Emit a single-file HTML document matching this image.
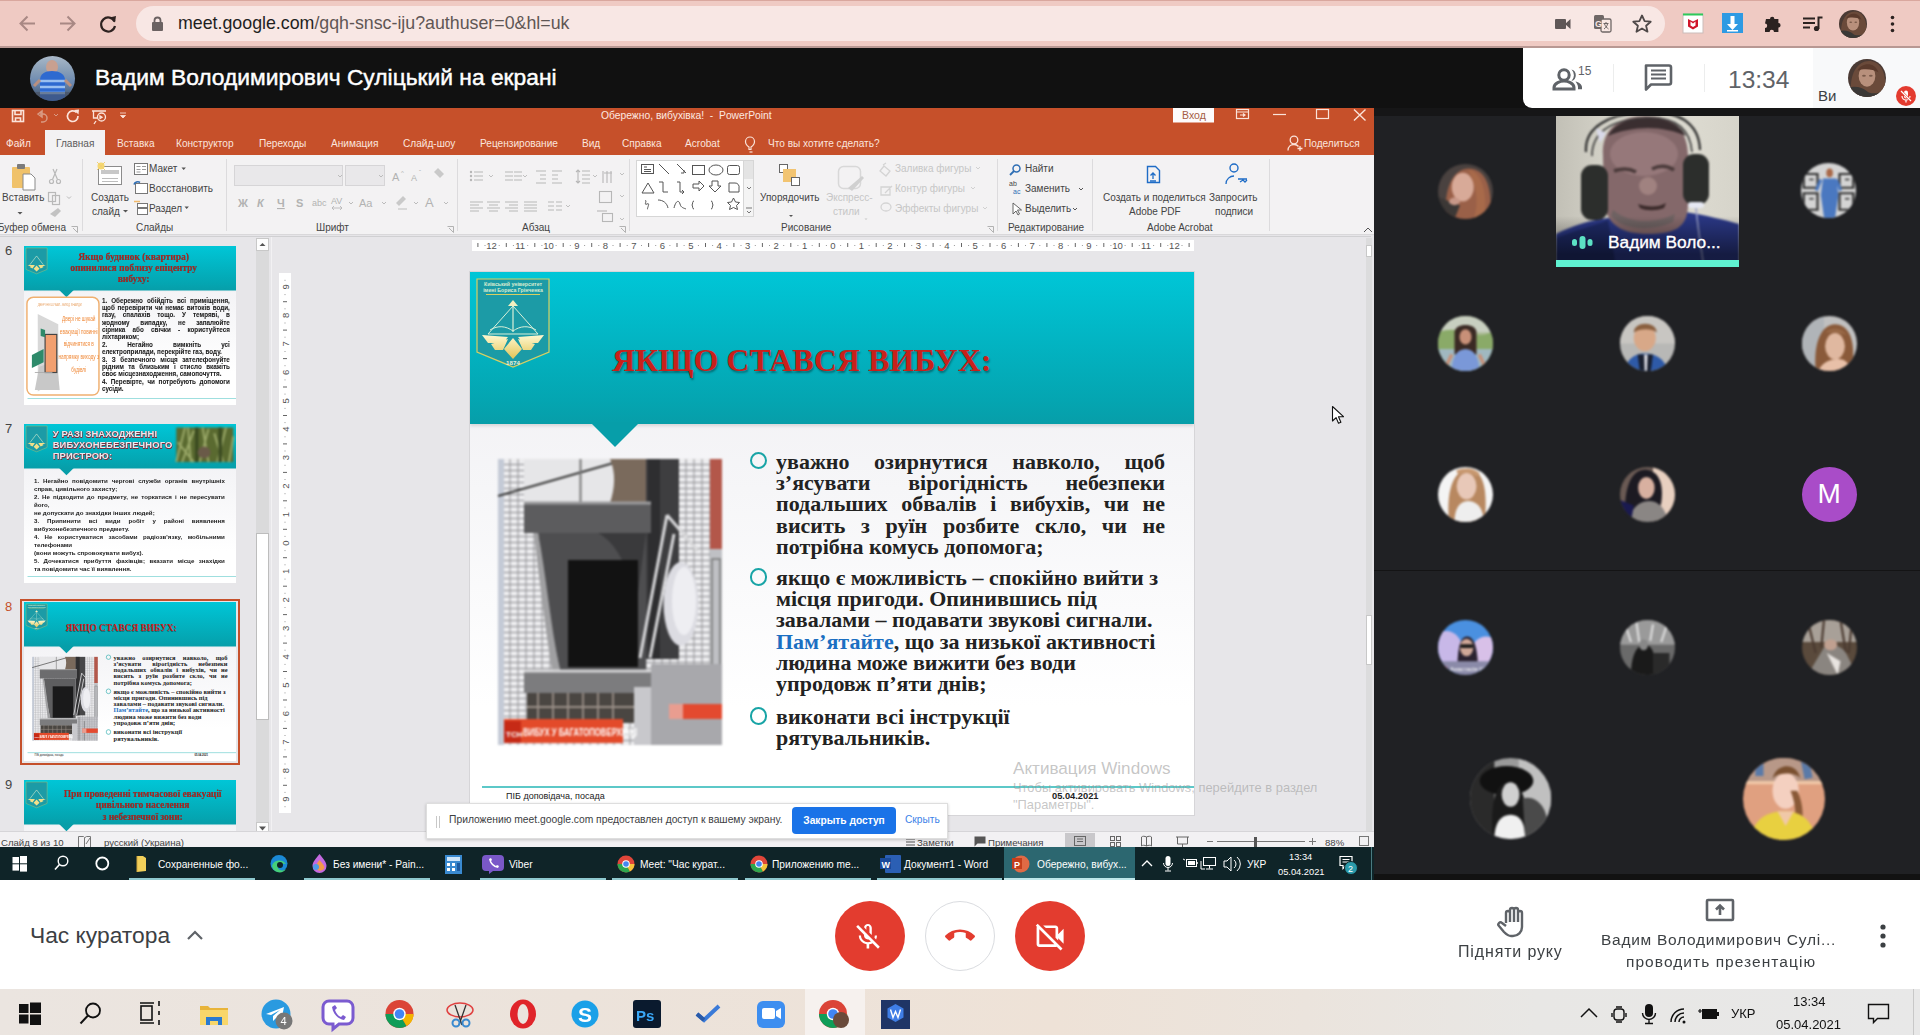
<!DOCTYPE html>
<html><head><meta charset="utf-8">
<style>
*{margin:0;padding:0;box-sizing:border-box}
html,body{width:1920px;height:1035px;overflow:hidden;background:#fff;font-family:"Liberation Sans",sans-serif}
.a{position:absolute}
.sv{position:absolute;overflow:visible}
/* chrome */
#chrome{left:0;top:0;width:1920px;height:48px;background:#efcac3;border-top:1px solid #d9a79e}
#omni{left:136px;top:6px;width:1529px;height:35px;border-radius:18px;background:#f8e7e4}
#url{left:178px;top:13px;font-size:17.8px;color:#5f5654;white-space:nowrap;letter-spacing:0px}
#url b{font-weight:normal;color:#1f1f1f}
/* meet header */
#mhead{left:0;top:48px;width:1920px;height:60px;background:#111}
#mname{left:95px;top:64px;font-size:22.8px;color:#fff;white-space:nowrap;-webkit-text-stroke:.45px #fff}
#mpanel{left:1523px;top:48px;width:397px;height:60px;background:#fff;border-bottom-left-radius:9px}
#mpanel2{left:1813px;top:48px;width:107px;height:60px;background:#f8f9fa}
/* ppt */
#ppt{left:0;top:108px;width:1374px;height:772px;background:#e6e5e8;overflow:hidden}
#ptitle{left:0;top:0;width:1374px;height:47px;background:#c6502a}
#ptab{left:45px;top:22px;width:60px;height:26px;background:#f3f2f3}
#ribbon{left:0;top:47px;width:1374px;height:80px;background:#f3f2f3;border-bottom:1px solid #d9d8da}
.tab{position:absolute;top:30px;font-size:10.1px;color:#fbe5de;white-space:nowrap}
.rb{position:absolute;font-size:10px;color:#444;white-space:nowrap;line-height:12px}
.rg{position:absolute;top:114px;font-size:10px;color:#444;white-space:nowrap;line-height:12px}
.rsep{position:absolute;top:51px;width:1px;height:72px;background:#d4d3d5}
/* grid */
#grid{left:1374px;top:108px;width:546px;height:772px;background:#202124}
.av{position:absolute;border-radius:50%}

/* content */
.slide{position:absolute;width:724px;height:543px;overflow:hidden;background:linear-gradient(#eeedf1 0,#f6f6f8 40%,#fff 80%);font-family:"Liberation Serif",serif}
.shead{position:absolute;left:0;top:0;width:724px;height:152px;background:linear-gradient(#00c6d7,#04a5b1 85%,#079ea9);box-shadow:0 2px 3px rgba(0,0,0,.12)}
.stri{position:absolute;left:120px;top:150px;width:0;height:0;border-left:25px solid transparent;border-right:25px solid transparent;border-top:25px solid #079ea9}
.stitle{position:absolute;left:142px;top:70px;font-size:32px;font-weight:bold;color:#c8201a;white-space:nowrap;text-shadow:1px 2px 2px rgba(0,0,0,.35)}
.stext{position:absolute;left:306px;width:389px;font-size:22px;line-height:21.2px;font-weight:bold;color:#222;text-align:justify;text-align-last:left}
.stext .j{text-align-last:justify}
.bul{position:absolute;left:280px;width:17.5px;height:17.5px;border-radius:50%;border:2.6px solid #18a4a6}
.sfoot{position:absolute;left:12px;top:514px;width:712px;height:1.5px;background:#5cc8c8}
.sft{position:absolute;top:519px;font-family:"Liberation Sans",sans-serif;font-size:9px;color:#222;white-space:nowrap}
.vnum{position:absolute;font-size:10px;color:#555;transform:rotate(-90deg);transform-origin:center}
.thumb{position:absolute;width:212px;height:159px;overflow:hidden;background:#fff}
.tnum{position:absolute;left:5px;font-size:13px;color:#444}
.st{position:absolute;top:4px;font-size:9.6px;color:#444;white-space:nowrap;line-height:13px}
.ul{position:absolute;top:31px;height:2px;background:#8fc9cf}
.tt{position:absolute;top:10px;font-size:10.2px;color:#fff;white-space:nowrap;line-height:15px}
/* bottom */
#mbot{left:0;top:880px;width:1920px;height:109px;background:#fff}
#wtask{left:0;top:989px;width:1920px;height:46px;background:#ebe3dd}
</style></head><body>

<!-- CHROME -->
<div id="chrome" class="a"></div>
<div class="a" style="left:0;top:46px;width:1920px;height:2px;background:#b89893"></div>
<div id="omni" class="a"></div>
<svg class="sv" style="left:0;top:0" width="1920" height="48">
 <g fill="none" stroke-width="2">
  <path d="M35 23.5H21M27.5 16.5l-7 7 7 7" stroke="#a88884"/>
  <path d="M60 23.5h14M67.5 16.5l7 7-7 7" stroke="#a88884"/>
  <path d="M114.5 21.5A7 7 0 1 0 115 26" stroke="#2e2220" stroke-width="2.2"/>
 </g>
 <path d="M109.5 17.5l6.5-1.5-1 6.5z" fill="#2e2220"/>
 <rect x="152" y="22" width="11" height="9" rx="1" fill="#6b6262"/>
 <path d="M154.5 22.5v-2a3 3 0 0 1 6 0v2" fill="none" stroke="#6b6262" stroke-width="1.8"/>
 <!-- camera -->
 <rect x="1555" y="19" width="11" height="10" rx="1" fill="#5f5757"/>
 <path d="M1565 24l5.5-5v10z" fill="#5f5757"/>
 <!-- translate -->
 <rect x="1594" y="15" width="10" height="14" rx="1.5" fill="#6f6766"/>
 <rect x="1601" y="19" width="10" height="13" rx="1.5" fill="#f9e8e4" stroke="#6f6766" stroke-width="1.3"/>
 <text x="1595" y="26.5" font-family="Liberation Sans" font-weight="bold" font-size="9" fill="#f9e8e4">G</text>
 <path d="M1603.5 23.5h5M1606 22v1.5M1604.5 24c1 2.5 2.5 4 4 5M1607.5 24c-.5 2.5-2 4-3.5 5" stroke="#6f6766" stroke-width="1" fill="none"/>
 <!-- star -->
 <path d="M1642 15.5l2.6 5.6 6.1.6-4.6 4 1.4 6-5.5-3.2-5.5 3.2 1.4-6-4.6-4 6.1-.6z" fill="none" stroke="#4e4848" stroke-width="1.8" stroke-linejoin="round"/>
 <!-- mcafee -->
 <rect x="1683" y="14" width="20" height="19" fill="#fff" stroke="#cbbcba" stroke-width="1"/>
 <rect x="1683" y="13.5" width="20" height="2" fill="#2fc95a"/>
 <path d="M1688 19l5 2.5 5-2.5v7.5l-5 3-5-3z" fill="#d0152a"/>
 <path d="M1690.5 21.5l2.5 2 2.5-2v4l-2.5 1.5-2.5-1.5z" fill="#fff"/>
 <!-- download -->
 <rect x="1722" y="13" width="21" height="20" fill="#2e9ae3"/>
 <path d="M1730.5 16h4v8h3.5l-5.5 6-5.5-6h3.5z" fill="#fff"/>
 <rect x="1727" y="30" width="11" height="1.5" fill="#fff"/>
 <!-- puzzle -->
 <path d="M1766 19h4a2.2 2.2 0 0 1 4.4 0h4v4a2.2 2.2 0 0 1 0 4.4v4.6h-4.4a2.2 2.2 0 0 0-4.4 0h-4.6v-4a2.2 2.2 0 0 0 0-4.4z" fill="#2b2220"/>
 <!-- media -->
 <path d="M1803 18.5h12M1803 23h12M1803 27.5h7" stroke="#2b2220" stroke-width="2.2"/>
 <path d="M1818.5 29V17.5h4" stroke="#2b2220" stroke-width="2" fill="none"/>
 <circle cx="1816.5" cy="28.5" r="2.6" fill="#2b2220"/>
 <!-- dots -->
 <circle cx="1892.5" cy="17.5" r="1.8" fill="#2b2220"/><circle cx="1892.5" cy="24" r="1.8" fill="#2b2220"/><circle cx="1892.5" cy="30.5" r="1.8" fill="#2b2220"/>
</svg>
<svg class="sv" style="left:1839px;top:10px;filter:blur(.5px)" width="28" height="28" viewBox="0 0 100 100"><defs><clipPath id="hc1"><circle cx="50" cy="50" r="50"/></clipPath></defs><g clip-path="url(#hc1)"><rect width="100" height="100" fill="#4a3a34"/><path d="M10 100C0 50 20 5 55 5s50 40 40 95z" fill="#6a4a3a"/><ellipse cx="50" cy="45" rx="22" ry="28" fill="#b8907c"/><path d="M25 30c10-20 45-25 55 5-15-10-40-10-55-5z" fill="#5a3a2c"/><path d="M0 75c20-5 40 0 50 10s35 5 50-5v20H0z" fill="#3a3836"/><ellipse cx="42" cy="44" rx="5" ry="2.5" fill="#7a5a4a"/><ellipse cx="60" cy="44" rx="5" ry="2.5" fill="#7a5a4a"/></g></svg>
<div id="url" class="a"><b>meet.google.com</b>/gqh-snsc-iju?authuser=0&amp;hl=uk</div>

<!-- MEET HEADER -->
<div id="mhead" class="a"></div>
<div class="a av" style="left:30px;top:56px;width:45px;height:45px;overflow:hidden;background:linear-gradient(#a9b8c8 0,#8aa0b8 30%,#6a88b0 60%,#3a4a60 100%)">
 <svg class="sv" style="left:0;top:0;filter:blur(.6px)" width="45" height="45"><ellipse cx="22" cy="11" rx="6" ry="7" fill="#c8a090"/><path d="M10 45V24c0-6 5-9 12-9s13 3 13 9v21z" fill="#2e6ad0"/><path d="M10 25h25M10 31h25M10 37h25" stroke="#9ac0f0" stroke-width="2.5"/><path d="M4 30l6-6M41 30l-6-6" stroke="#b89080" stroke-width="3"/><rect x="0" y="36" width="45" height="9" fill="#4a5060" opacity=".6"/></svg></div>
<div id="mname" class="a">Вадим Володимирович Суліцький на екрані</div>
<div id="mpanel" class="a"></div>
<div id="mpanel2" class="a"></div>
<svg class="sv" style="left:1523px;top:48px" width="397" height="60">
 <g fill="#5f6368">
  <circle cx="41" cy="27" r="5.2" fill="none" stroke="#5f6368" stroke-width="3"/>
  <path d="M31 39.5c0-4.5 6.5-6.5 10-6.5s10 2 10 6.5v1.5H31z" fill="none" stroke="#5f6368" stroke-width="3"/>
  <path d="M48.5 21.5a6 6 0 0 1 0 11.5 8 8 0 0 0 0-11.5z"/>
  <path d="M52.5 33.5c3 .8 6.5 2.6 6.5 5.8v2h-4v-2c0-2-1-3.8-2.5-5.8z"/>
 </g>
 <text x="55" y="27" font-family="Liberation Sans" font-size="12" fill="#5f6368">15</text>
 <rect x="90" y="16" width="1" height="28" fill="#eceded"/>
 <path d="M123 17.5h23c1 0 2 .8 2 2v15c0 1.2-1 2-2 2h-18l-5 5z" fill="none" stroke="#5f6368" stroke-width="2.6" stroke-linejoin="round"/>
 <path d="M128 22.5h15M128 26.5h15M128 30.5h15" stroke="#5f6368" stroke-width="2.2"/>
 <rect x="181" y="16" width="1" height="28" fill="#eceded"/>
 <text x="205" y="39.5" font-family="Liberation Sans" font-size="24.5" fill="#5f6368">13:34</text>
 <text x="295" y="53" font-family="Liberation Sans" font-size="15" fill="#3c4043">Ви</text>
</svg>
<svg class="sv" style="left:1848px;top:59px;filter:blur(.5px)" width="38" height="38" viewBox="0 0 100 100"><defs><clipPath id="hc2"><circle cx="50" cy="50" r="50"/></clipPath></defs><g clip-path="url(#hc2)"><rect width="100" height="100" fill="#4a3a34"/><path d="M10 100C0 50 20 5 55 5s50 40 40 95z" fill="#6a4a3a"/><ellipse cx="50" cy="45" rx="22" ry="28" fill="#b8907c"/><path d="M25 30c10-20 45-25 55 5-15-10-40-10-55-5z" fill="#5a3a2c"/><path d="M0 75c20-5 40 0 50 10s35 5 50-5v20H0z" fill="#3a3836"/><ellipse cx="42" cy="44" rx="5" ry="2.5" fill="#7a5a4a"/><ellipse cx="60" cy="44" rx="5" ry="2.5" fill="#7a5a4a"/></g></svg>
<div class="a av" style="left:1896px;top:86px;width:20px;height:20px;background:#e33b2f"></div>
<svg class="sv" style="left:1896px;top:86px" width="20" height="20">
 <path d="M8 6.5a2 2 0 0 1 4 0v4a2 2 0 0 1-4 0z" fill="#fff"/>
 <path d="M6 10a4 4 0 0 0 8 0M10 14v2.5" stroke="#fff" stroke-width="1.2" fill="none"/>
 <path d="M5 5l10 10" stroke="#e33b2f" stroke-width="2.4"/><path d="M5 5l10 10" stroke="#fff" stroke-width="1.2"/>
</svg>

<!-- PPT -->
<div id="ppt" class="a">
  <div id="ptitle" class="a"></div>
  <div id="ptab" class="a"></div>
  <div id="ribbon" class="a"></div>
  <!-- title bar -->
  <svg class="sv" style="left:0;top:0" width="1374" height="48">
   <g transform="translate(0 -7)">
   <g fill="none" stroke="#fbe3da" stroke-width="1.6">
    <rect x="12.5" y="9.5" width="11" height="11"/>
    <path d="M15 9.5v4h6v-4M15.5 20.5v-3.5h5v3.5"/>
   </g>
   <path d="M38 13l4-3v6zM40 13h3a4 4 0 0 1 0 8h-2" fill="none" stroke="#d99a83" stroke-width="1.5"/>
   <path d="M54 13l2 2 2-2" fill="none" stroke="#d99a83" stroke-width="1"/>
   <path d="M76.5 11.5A5.3 5.3 0 1 0 78 15" fill="none" stroke="#fbe3da" stroke-width="1.7"/>
   <path d="M74 9l5-.5-.5 5z" fill="#fbe3da"/>
   <g fill="none" stroke="#fbe3da" stroke-width="1.3">
    <path d="M92 10h14M93.5 10v7h4"/>
    <circle cx="101.5" cy="16" r="4"/>
    <path d="M96 20l-2 3M100 15v2.5l2-1.2z"/>
   </g>
   <path d="M120 12h6M120.5 14.5h5l-2.5 2.5z" fill="#fbe3da" stroke="#fbe3da" stroke-width=".8"/>
   </g>
   <text x="601" y="10.8" font-family="Liberation Sans" font-size="10.3" fill="#fde8e0" xml:space="preserve">Обережно, вибухівка!  -  PowerPoint</text>
   <rect x="1173" y="0" width="41" height="14.5" fill="#fdfbfb"/>
   <text x="1182" y="11" font-family="Liberation Sans" font-size="10.5" fill="#a55c45">Вход</text>
   <g fill="none" stroke="#fbe3da" stroke-width="1.2">
    <rect x="1236.5" y="1.5" width="12" height="9"/>
    <path d="M1236.5 4h12M1240 7h5M1243 5.5l2 1.5-2 1.5"/>
    <path d="M1273 6.5h13"/>
    <rect x="1316.5" y="1.5" width="12" height="9"/>
    <path d="M1354 1.5l11.5 11M1365.5 1.5l-11.5 11" stroke-width="1.4"/>
   </g>
   <!-- share -->
   <g fill="none" stroke="#fbe3da" stroke-width="1.3">
    <circle cx="1294" cy="32" r="3.8"/>
    <path d="M1288 42.5c0-4 3-6 6-6 2 0 3.5.7 4.5 2M1297.5 40.5h5M1300 38v5"/>
   </g>
   <!-- lightbulb -->
   <g fill="none" stroke="#fbe3da" stroke-width="1.2">
    <path d="M749 41.5v-2.5c-2.5-1.5-3.5-3.5-3.5-5.5a4.5 4.5 0 0 1 9 0c0 2-1 4-3.5 5.5v2.5z"/>
    <path d="M749.5 44h3"/>
   </g>
  </svg>
  <div class="tab" style="left:6px;color:#fde8e0">Файл</div>
  <div class="tab" style="left:56px;color:#5c5c5c">Главная</div>
  <div class="tab" style="left:117px">Вставка</div>
  <div class="tab" style="left:176px">Конструктор</div>
  <div class="tab" style="left:259px">Переходы</div>
  <div class="tab" style="left:331px">Анимация</div>
  <div class="tab" style="left:403px">Слайд-шоу</div>
  <div class="tab" style="left:480px">Рецензирование</div>
  <div class="tab" style="left:582px">Вид</div>
  <div class="tab" style="left:622px">Справка</div>
  <div class="tab" style="left:685px">Acrobat</div>
  <div class="tab" style="left:768px">Что вы хотите сделать?</div>
  <div class="tab" style="left:1304px">Поделиться</div>



  <!-- CONTENT AREA -->
  <div class="a" style="left:0;top:128px;width:1374px;height:596px;background:#e7e6e9"></div>
  <div class="a" style="left:271px;top:128px;width:1px;height:598px;background:#f2f1f3"></div>
  <div class="a" style="left:0;top:128px;width:1371px;height:1px;background:#d0d0d2"></div>
  <!-- thumbs pane -->
  <div class="tnum" style="top:135px">6</div>
  <div class="tnum" style="top:313px">7</div>
  <div class="tnum" style="top:491px;color:#c5502b">8</div>
  <div class="tnum" style="top:669px">9</div>
  <div class="a" style="left:20px;top:491px;width:220px;height:166px;border:2.5px solid #c5502b;background:#e6e5e8"></div>
  <div class="thumb" style="left:24px;top:138px">
   <div style="position:absolute;left:0;top:0;width:724px;height:543px;transform:scale(0.29282);transform-origin:0 0">
  <div class="slide" style="left:0;top:0">
   <div class="shead"></div>
   <div class="stri" style="left:120px"></div>
   <svg class="sv" style="left:6px;top:6px" width="74" height="90"><path d="M1 1h72v73l-36 15-36-15z" fill="#1c9ba6" stroke="#d8cf62" stroke-width="1.2"/><path d="M6 59h26l-14 6zM68 59H42l14 6zM13 66l18-6-8 11zM61 66l-18-6 8 11zM37 61l10 11-10 9-10-9z" fill="#f2e08a"/><path d="M37 28L14 58M37 28l23 30" stroke="#dff0d0" stroke-width="2" fill="none"/></svg>
   <div style="position:absolute;left:59px;top:17px;width:630px;text-align:center;font-size:32.2px;line-height:38px;font-weight:bold;color:#b0221c;text-shadow:1px 1px 2px rgba(0,0,0,.3)">Якщо будинок (квартира)<br>опинилися поблизу епіцентру<br>вибуху:</div>
   <svg class="sv" style="left:7px;top:172px;filter:blur(.6px)" width="252" height="340"><rect x="3" y="3" width="246" height="334" rx="22" fill="#fff" stroke="#f0b070" stroke-width="5"/><text x="40" y="32" font-size="9" fill="#e8a060" font-family="Liberation Sans">ДВЕРІ НЕ ШУКАЙ - ВИХІД ЗНАЙДИ</text><path d="M40 60l70 35v190l-70 40z" fill="#d8d8d8"/><path d="M45 240l60-20 10 100H30z" fill="#c8c8c8"/><rect x="65" y="130" width="40" height="130" fill="#f2a070" stroke="#444" stroke-width="4"/><path d="M50 110l15 5v25l-15-5z" fill="#2e8a6a"/><path d="M20 200l40-20v45l-40 20z" fill="#2e8a6a"/><path d="M30 260h60" stroke="#aaa" stroke-width="3"/><g font-family="Liberation Sans" font-size="27" fill="#f08a3a" text-anchor="middle" transform="scale(.6 1)"><text x="300" y="85">Двері не шукай</text><text x="300" y="128">евакуації повинні</text><text x="300" y="171">відчинятися в</text><text x="300" y="214">напрямку виходу з</text><text x="300" y="257">будівлі</text></g></svg>
   <div style="position:absolute;left:266px;top:174px;width:437px;font-family:'Liberation Sans';font-size:21.5px;line-height:25.2px;color:#1a1a1a;font-weight:bold;-webkit-text-stroke:.2px #1a1a1a"><div style="text-align:justify;text-align-last:justify;white-space:nowrap;overflow:visible">1. Обережно обійдіть всі приміщення,</div><div style="text-align:justify;text-align-last:justify;white-space:nowrap;overflow:visible">щоб перевірити чи немає витоків води,</div><div style="text-align:justify;text-align-last:justify;white-space:nowrap;overflow:visible">газу, спалахів тощо. У темряві, в</div><div style="text-align:justify;text-align-last:justify;white-space:nowrap;overflow:visible">жодному випадку, не запалюйте</div><div style="text-align:justify;text-align-last:justify;white-space:nowrap;overflow:visible">сірника або свічки - користуйтеся</div><div style="text-align:justify;text-align-last:left;white-space:nowrap;overflow:visible">ліхтариком;</div><div style="text-align:justify;text-align-last:justify;white-space:nowrap;overflow:visible">2. Негайно вимкніть усі</div><div style="text-align:justify;text-align-last:left;white-space:nowrap;overflow:visible">електроприлади, перекрійте газ, воду.</div><div style="text-align:justify;text-align-last:justify;white-space:nowrap;overflow:visible">3. З безпечного місця зателефонуйте</div><div style="text-align:justify;text-align-last:justify;white-space:nowrap;overflow:visible">рідним та близьким і стисло вкажіть</div><div style="text-align:justify;text-align-last:left;white-space:nowrap;overflow:visible">своє місцезнаходження, самопочуття.</div><div style="text-align:justify;text-align-last:justify;white-space:nowrap;overflow:visible">4. Перевірте, чи потребують допомоги</div><div style="text-align:justify;text-align-last:left;white-space:nowrap;overflow:visible">сусіди.</div></div>
   <div class="sfoot" style="top:520px"></div>
  </div>
   </div>
  </div>
  <div class="thumb" style="left:24px;top:316px">
   <div style="position:absolute;left:0;top:0;width:724px;height:543px;transform:scale(0.29282);transform-origin:0 0">
  <div class="slide" style="left:0;top:0">
   <div class="shead"></div>
   <div class="stri" style="left:120px"></div>
   <svg class="sv" style="left:6px;top:6px" width="74" height="90"><path d="M1 1h72v73l-36 15-36-15z" fill="#1c9ba6" stroke="#d8cf62" stroke-width="1.2"/><path d="M6 59h26l-14 6zM68 59H42l14 6zM13 66l18-6-8 11zM61 66l-18-6 8 11zM37 61l10 11-10 9-10-9z" fill="#f2e08a"/><path d="M37 28L14 58M37 28l23 30" stroke="#dff0d0" stroke-width="2" fill="none"/></svg>
   <div style="position:absolute;left:98px;top:17px;font-family:'Liberation Sans';font-size:32px;font-weight:bold;line-height:37px;color:#e8ecf0;text-shadow:2px 2px 0 #7a3040,-1px -1px 0 #7a3040,1px -1px 0 #7a3040,-1px 1px 0 #7a3040;white-space:nowrap;letter-spacing:.5px">У РАЗІ ЗНАХОДЖЕННІ<br>ВИБУХОНЕБЕЗПЕЧНОГО<br>ПРИСТРОЮ:</div>
   <svg class="sv" style="left:520px;top:12px;filter:blur(4px)" width="195" height="118"><rect width="195" height="118" fill="#5a6a30"/><path d="M0 118L30 0M20 118L60 10M50 118L40 0M80 118L110 5M110 118L90 0M140 118L170 0M160 118L130 20M180 118L195 30M5 50L60 118" stroke="#9aa868" stroke-width="7"/><path d="M70 0v118M150 0v118" stroke="#3a4a20" stroke-width="12"/><ellipse cx="95" cy="85" rx="22" ry="20" fill="#6a5a48"/></svg>
   <div style="position:absolute;left:34px;top:180px;width:652px;font-family:'Liberation Sans';font-size:21px;line-height:27.3px;color:#1a1a1a;font-weight:bold;"><div style="text-align:justify;text-align-last:justify;white-space:nowrap;overflow:visible">1. Негайно повідомити чергові служби органів внутрішніх</div><div style="text-align:justify;text-align-last:left;white-space:nowrap;overflow:visible">справ, цивільного захисту;</div><div style="text-align:justify;text-align-last:justify;white-space:nowrap;overflow:visible">2. Не підходити до предмету, не торкатися і не пересувати</div><div style="text-align:justify;text-align-last:left;white-space:nowrap;overflow:visible">його,</div><div style="text-align:justify;text-align-last:left;white-space:nowrap;overflow:visible">не допускати до знахідки інших людей;</div><div style="text-align:justify;text-align-last:justify;white-space:nowrap;overflow:visible">3. Припинити всі види робіт у районі виявлення</div><div style="text-align:justify;text-align-last:left;white-space:nowrap;overflow:visible">вибухонебезпечного предмету.</div><div style="text-align:justify;text-align-last:justify;white-space:nowrap;overflow:visible">4. Не користуватися засобами радіозв'язку, мобільними</div><div style="text-align:justify;text-align-last:left;white-space:nowrap;overflow:visible">телефонами</div><div style="text-align:justify;text-align-last:left;white-space:nowrap;overflow:visible">(вони можуть спровокувати вибух).</div><div style="text-align:justify;text-align-last:justify;white-space:nowrap;overflow:visible">5. Дочекатися прибуття фахівців; вказати місце знахідки</div><div style="text-align:justify;text-align-last:left;white-space:nowrap;overflow:visible">та повідомити час її виявлення.</div></div>
   <div class="sfoot" style="top:520px"></div>
  </div>
   </div>
  </div>
  <div class="thumb" style="left:24px;top:494px">
   <div style="position:absolute;left:0;top:0;width:724px;height:543px;transform:scale(0.29282);transform-origin:0 0">
  <div class="slide" style="left:0;top:0">
   <div class="shead"></div>
   <div class="stri"></div>
   <svg class="sv" style="left:6px;top:6px" width="74" height="90">
    <path d="M1 1h72v73l-36 15-36-15z" fill="#1c9ba6" stroke="#d8cf62" stroke-width="1.2"/>
    <text x="37" y="8" text-anchor="middle" font-family="Liberation Sans" font-size="5.2" font-weight="bold" fill="#d8ecd0">Київський університет</text><text x="37" y="14" text-anchor="middle" font-family="Liberation Sans" font-size="5.2" font-weight="bold" fill="#d8ecd0">імені Бориса Грінченка</text>
    <path d="M10 16.5h54" stroke="#d8cf62" stroke-width="1"/>
    <defs><linearGradient id="gold2" x1="0" y1="0" x2="0" y2="1"><stop offset="0" stop-color="#fff8d0"/><stop offset="1" stop-color="#e2c456"/></linearGradient></defs>
    <path d="M37 22l-5 6h10z" fill="#f4f0c0"/>
    <path d="M37 28L12 56h50z" stroke="#d8f0d8" stroke-width="1" fill="none"/>
    <path d="M37 28v26" stroke="#d8f0d8" stroke-width="1.2"/>
    <path d="M14 52c8-5 16-4 23 1 7-5 15-6 23-1" stroke="#d8f0d8" stroke-width="1" fill="none"/>
    <path d="M6 57l26 2-5 6H12zM68 57l-26 2 5 6h15zM15 66l17-5-5 11h-8zM59 66l-17-5 5 11h8zM37 60l9 11-9 10-9-10z" fill="url(#gold2)"/>
    <text x="37" y="86.5" text-anchor="middle" font-family="Liberation Sans" font-size="6.2" font-weight="bold" fill="#e8f0d8">1874</text>
   </svg>
   <div class="stitle">ЯКЩО СТАВСЯ ВИБУХ:</div>
   <svg class="sv" style="left:28px;top:187px;filter:blur(1.3px)" width="224" height="286">
    <defs>
     <pattern id="brick2" width="8" height="6" patternUnits="userSpaceOnUse">
      <rect width="8" height="6" fill="#ececee"/>
      <path d="M0 5.5h8M4 0v5.5" stroke="#8e8e92" stroke-width="1"/>
     </pattern>
    </defs>
    <rect width="224" height="286" fill="url(#brick2)"/>
    <rect x="0" y="0" width="6" height="286" fill="#c4cad6"/>
    <rect x="26" y="0" width="100" height="52" fill="#e6e6e8"/>
    <path d="M0 37L119 3" stroke="#3a3a3a" stroke-width="2.2"/>
    <path d="M82.5 0v52" stroke="#777" stroke-width="2"/>
    <path d="M112 0h40v44h-40c5-15 6-30 0-44z" fill="#7a6a5c"/>
    <rect x="148" y="0" width="33" height="200" fill="#48484a"/>
    <rect x="150" y="0" width="12" height="200" fill="#2e2e30"/>
    <rect x="212" y="0" width="12" height="90" fill="#b3574a"/>
    <rect x="212" y="90" width="12" height="135" fill="#bfc0c4"/>
    <path d="M214 100h8v120h-8z" fill="none" stroke="#777" stroke-width="1.5"/>
    <path d="M26 44h127v30H26z" fill="#6c6c6e"/>
    <path d="M26 44h127" stroke="#9a9a9c" stroke-width="3"/>
    <path d="M40 74h108v137H62C52 170 45 120 40 74z" fill="#5e5e60"/>
    <path d="M40 74c8 40 12 90 22 137h-8C46 160 40 110 36 74z" fill="#a0a0a2"/>
    <rect x="70" y="101" width="70" height="107" fill="#1a1a1b"/>
    <path d="M169 56l31 36M169 56l-27 143M176 75l-24 124" stroke="#d8d8da" stroke-width="3" fill="none"/>
    <ellipse cx="183" cy="145" rx="17.5" ry="42" fill="#dcdce2"/>
    <ellipse cx="186" cy="142" rx="12" ry="34" fill="#eeeef2"/>
    <path d="M26 211h127v23H26z" fill="#7c7c7e"/>
    <path d="M26 212h127" stroke="#d4d4d6" stroke-width="3"/>
    <rect x="29" y="234" width="107" height="30" fill="#4a4642"/>
    <path d="M40 234v30M55 234v30M70 234v30M85 234v30M100 234v30M115 234v30M29 248h107" stroke="#9a9088" stroke-width="1.8"/>
    <rect x="136" y="228" width="17" height="58" fill="#c8c8cc"/>
    <rect x="153" y="205" width="71" height="81" fill="url(#brick)"/><rect x="153" y="205" width="71" height="81" fill="#9a9aa0" opacity=".45"/><path d="M160 205v81M178 220v66" stroke="#666" stroke-width="2"/>
    <rect x="171" y="245" width="53" height="15" fill="#e34a30"/>
    <rect x="171" y="245" width="14" height="15" fill="#f0f0f0" opacity=".5"/>
    <rect x="6" y="260" width="119" height="24" fill="#e34a2a"/>
    <rect x="6" y="262" width="17" height="22" fill="#c62a16"/>
    <text x="8" y="278" font-family="Liberation Sans" font-size="8" font-weight="bold" fill="#fff">ТСН</text>
    <text x="0" y="0" font-family="Liberation Sans" font-size="10.5" font-weight="bold" fill="#fff" transform="translate(25 277) scale(.74 1)">ВИБУХ У БАГАТОПОВЕРХІВЦІ</text>
   </svg>
   <div class="bul" style="left:279.8px;top:179.5px"></div>
   <div class="bul" style="left:279.8px;top:296px"></div>
   <div class="bul" style="left:279.8px;top:435px"></div>
   <div class="stext" style="top:179px">уважно озирнутися навколо, щоб з’ясувати вірогідність небезпеки подальших обвалів і вибухів, чи не висить з руїн розбите скло, чи не потрібна комусь допомога;</div>
   <div class="stext" style="top:295px;width:395px;text-align:left">якщо є можливість – спокійно вийти з місця пригоди. Опинившись під завалами – подавати звукові сигнали. <span style="color:#1b6fc2">Пам’ятайте</span>, що за низької активності людина може вижити без води упродовж п’яти днів;</div>
   <div class="stext" style="top:434px;text-align:left">виконати всі інструкції рятувальників.</div>
   <div class="sfoot"></div>
   <div class="sft" style="left:36px">ПІБ доповідача, посада</div>
   <div class="sft" style="left:582px;font-weight:bold;font-size:9.3px">05.04.2021</div>
  </div>

   </div>
  </div>
  <div class="thumb" style="left:24px;top:672px">
   <div style="position:absolute;left:0;top:0;width:724px;height:543px;transform:scale(0.29282);transform-origin:0 0">
  <div class="slide" style="left:0;top:0">
   <div class="shead"></div>
   <div class="stri" style="left:120px"></div>
   <svg class="sv" style="left:6px;top:6px" width="74" height="90"><path d="M1 1h72v73l-36 15-36-15z" fill="#1c9ba6" stroke="#d8cf62" stroke-width="1.2"/><path d="M6 59h26l-14 6zM68 59H42l14 6zM13 66l18-6-8 11zM61 66l-18-6 8 11zM37 61l10 11-10 9-10-9z" fill="#f2e08a"/><path d="M37 28L14 58M37 28l23 30" stroke="#dff0d0" stroke-width="2" fill="none"/></svg>
   <div style="position:absolute;left:90px;top:27px;width:630px;text-align:center;font-size:32px;line-height:39px;font-weight:bold;color:#b0221c;text-shadow:1px 1px 2px rgba(0,0,0,.3)">При проведенні тимчасової евакуації<br>цивільного населення<br>з небезпечної зони:</div>
  </div>
   </div>
  </div>

  <!-- thumbs scrollbar -->
  <div class="a" style="left:256px;top:130px;width:13px;height:596px;background:#dadadb"></div>
  <div class="a" style="left:256px;top:130px;width:13px;height:13px;background:#fdfdfd;border:1px solid #c8c8c8"></div>
  <svg class="sv" style="left:256px;top:130px" width="13" height="596"><path d="M3.5 8l3-3 3 3z" fill="#555"/><path d="M3.5 588l3 3 3-3z" fill="#555"/></svg>
  <div class="a" style="left:256px;top:714px;width:13px;height:13px;background:#fdfdfd;border:1px solid #c8c8c8"></div>
  <svg class="sv" style="left:256px;top:714px" width="13" height="13"><path d="M3 4.5h7l-3.5 4z" fill="#555"/></svg>
  <div class="a" style="left:256px;top:425px;width:13px;height:187px;background:#fff;border:1px solid #bdbdbd"></div>
  <!-- vertical ruler -->
  <div class="a" style="left:279px;top:165px;width:12px;height:540px;background:#fff"></div>
  <svg class="sv" style="left:279px;top:165px" width="12" height="540"><text x="0" y="0" transform="translate(9.5 13.9) rotate(-90)" text-anchor="middle" font-family="Liberation Sans" font-size="9.5" fill="#555">9</text><text x="0" y="0" transform="translate(9.5 42.4) rotate(-90)" text-anchor="middle" font-family="Liberation Sans" font-size="9.5" fill="#555">8</text><text x="0" y="0" transform="translate(9.5 70.8) rotate(-90)" text-anchor="middle" font-family="Liberation Sans" font-size="9.5" fill="#555">7</text><text x="0" y="0" transform="translate(9.5 99.3) rotate(-90)" text-anchor="middle" font-family="Liberation Sans" font-size="9.5" fill="#555">6</text><text x="0" y="0" transform="translate(9.5 127.8) rotate(-90)" text-anchor="middle" font-family="Liberation Sans" font-size="9.5" fill="#555">5</text><text x="0" y="0" transform="translate(9.5 156.2) rotate(-90)" text-anchor="middle" font-family="Liberation Sans" font-size="9.5" fill="#555">4</text><text x="0" y="0" transform="translate(9.5 184.7) rotate(-90)" text-anchor="middle" font-family="Liberation Sans" font-size="9.5" fill="#555">3</text><text x="0" y="0" transform="translate(9.5 213.1) rotate(-90)" text-anchor="middle" font-family="Liberation Sans" font-size="9.5" fill="#555">2</text><text x="0" y="0" transform="translate(9.5 241.6) rotate(-90)" text-anchor="middle" font-family="Liberation Sans" font-size="9.5" fill="#555">1</text><text x="0" y="0" transform="translate(9.5 270.0) rotate(-90)" text-anchor="middle" font-family="Liberation Sans" font-size="9.5" fill="#555">0</text><text x="0" y="0" transform="translate(9.5 298.4) rotate(-90)" text-anchor="middle" font-family="Liberation Sans" font-size="9.5" fill="#555">1</text><text x="0" y="0" transform="translate(9.5 326.9) rotate(-90)" text-anchor="middle" font-family="Liberation Sans" font-size="9.5" fill="#555">2</text><text x="0" y="0" transform="translate(9.5 355.4) rotate(-90)" text-anchor="middle" font-family="Liberation Sans" font-size="9.5" fill="#555">3</text><text x="0" y="0" transform="translate(9.5 383.8) rotate(-90)" text-anchor="middle" font-family="Liberation Sans" font-size="9.5" fill="#555">4</text><text x="0" y="0" transform="translate(9.5 412.2) rotate(-90)" text-anchor="middle" font-family="Liberation Sans" font-size="9.5" fill="#555">5</text><text x="0" y="0" transform="translate(9.5 440.7) rotate(-90)" text-anchor="middle" font-family="Liberation Sans" font-size="9.5" fill="#555">6</text><text x="0" y="0" transform="translate(9.5 469.1) rotate(-90)" text-anchor="middle" font-family="Liberation Sans" font-size="9.5" fill="#555">7</text><text x="0" y="0" transform="translate(9.5 497.6) rotate(-90)" text-anchor="middle" font-family="Liberation Sans" font-size="9.5" fill="#555">8</text><text x="0" y="0" transform="translate(9.5 526.0) rotate(-90)" text-anchor="middle" font-family="Liberation Sans" font-size="9.5" fill="#555">9</text><rect x="5.5" y="6.8" width="1" height="1" fill="#999"/><rect x="4" y="28.2" width="4" height="1" fill="#666"/><rect x="5.5" y="21.1" width="1" height="1" fill="#999"/><rect x="5.5" y="35.3" width="1" height="1" fill="#999"/><rect x="4" y="56.6" width="4" height="1" fill="#666"/><rect x="5.5" y="49.5" width="1" height="1" fill="#999"/><rect x="5.5" y="63.7" width="1" height="1" fill="#999"/><rect x="4" y="85.1" width="4" height="1" fill="#666"/><rect x="5.5" y="78.0" width="1" height="1" fill="#999"/><rect x="5.5" y="92.2" width="1" height="1" fill="#999"/><rect x="4" y="113.5" width="4" height="1" fill="#666"/><rect x="5.5" y="106.4" width="1" height="1" fill="#999"/><rect x="5.5" y="120.6" width="1" height="1" fill="#999"/><rect x="4" y="142.0" width="4" height="1" fill="#666"/><rect x="5.5" y="134.9" width="1" height="1" fill="#999"/><rect x="5.5" y="149.1" width="1" height="1" fill="#999"/><rect x="4" y="170.4" width="4" height="1" fill="#666"/><rect x="5.5" y="163.3" width="1" height="1" fill="#999"/><rect x="5.5" y="177.5" width="1" height="1" fill="#999"/><rect x="4" y="198.9" width="4" height="1" fill="#666"/><rect x="5.5" y="191.8" width="1" height="1" fill="#999"/><rect x="5.5" y="206.0" width="1" height="1" fill="#999"/><rect x="4" y="227.3" width="4" height="1" fill="#666"/><rect x="5.5" y="220.2" width="1" height="1" fill="#999"/><rect x="5.5" y="234.4" width="1" height="1" fill="#999"/><rect x="4" y="255.8" width="4" height="1" fill="#666"/><rect x="5.5" y="248.7" width="1" height="1" fill="#999"/><rect x="5.5" y="262.9" width="1" height="1" fill="#999"/><rect x="4" y="284.2" width="4" height="1" fill="#666"/><rect x="5.5" y="277.1" width="1" height="1" fill="#999"/><rect x="5.5" y="291.3" width="1" height="1" fill="#999"/><rect x="4" y="312.7" width="4" height="1" fill="#666"/><rect x="5.5" y="305.6" width="1" height="1" fill="#999"/><rect x="5.5" y="319.8" width="1" height="1" fill="#999"/><rect x="4" y="341.1" width="4" height="1" fill="#666"/><rect x="5.5" y="334.0" width="1" height="1" fill="#999"/><rect x="5.5" y="348.2" width="1" height="1" fill="#999"/><rect x="4" y="369.6" width="4" height="1" fill="#666"/><rect x="5.5" y="362.5" width="1" height="1" fill="#999"/><rect x="5.5" y="376.7" width="1" height="1" fill="#999"/><rect x="4" y="398.0" width="4" height="1" fill="#666"/><rect x="5.5" y="390.9" width="1" height="1" fill="#999"/><rect x="5.5" y="405.1" width="1" height="1" fill="#999"/><rect x="4" y="426.5" width="4" height="1" fill="#666"/><rect x="5.5" y="419.4" width="1" height="1" fill="#999"/><rect x="5.5" y="433.6" width="1" height="1" fill="#999"/><rect x="4" y="454.9" width="4" height="1" fill="#666"/><rect x="5.5" y="447.8" width="1" height="1" fill="#999"/><rect x="5.5" y="462.0" width="1" height="1" fill="#999"/><rect x="4" y="483.4" width="4" height="1" fill="#666"/><rect x="5.5" y="476.3" width="1" height="1" fill="#999"/><rect x="5.5" y="490.5" width="1" height="1" fill="#999"/><rect x="4" y="511.8" width="4" height="1" fill="#666"/><rect x="5.5" y="504.7" width="1" height="1" fill="#999"/><rect x="5.5" y="518.9" width="1" height="1" fill="#999"/><rect x="5.5" y="533.2" width="1" height="1" fill="#999"/></svg>
  <!-- horizontal ruler -->
  <div class="a" style="left:472px;top:132px;width:722px;height:11px;background:#fff"></div>
  <svg class="sv" style="left:472px;top:132px" width="722" height="11"><text x="19.6" y="9" text-anchor="middle" font-family="Liberation Sans" font-size="9.5" fill="#555">12</text><text x="48.1" y="9" text-anchor="middle" font-family="Liberation Sans" font-size="9.5" fill="#555">11</text><text x="76.5" y="9" text-anchor="middle" font-family="Liberation Sans" font-size="9.5" fill="#555">10</text><text x="104.9" y="9" text-anchor="middle" font-family="Liberation Sans" font-size="9.5" fill="#555">9</text><text x="133.4" y="9" text-anchor="middle" font-family="Liberation Sans" font-size="9.5" fill="#555">8</text><text x="161.8" y="9" text-anchor="middle" font-family="Liberation Sans" font-size="9.5" fill="#555">7</text><text x="190.3" y="9" text-anchor="middle" font-family="Liberation Sans" font-size="9.5" fill="#555">6</text><text x="218.8" y="9" text-anchor="middle" font-family="Liberation Sans" font-size="9.5" fill="#555">5</text><text x="247.2" y="9" text-anchor="middle" font-family="Liberation Sans" font-size="9.5" fill="#555">4</text><text x="275.6" y="9" text-anchor="middle" font-family="Liberation Sans" font-size="9.5" fill="#555">3</text><text x="304.1" y="9" text-anchor="middle" font-family="Liberation Sans" font-size="9.5" fill="#555">2</text><text x="332.6" y="9" text-anchor="middle" font-family="Liberation Sans" font-size="9.5" fill="#555">1</text><text x="361.0" y="9" text-anchor="middle" font-family="Liberation Sans" font-size="9.5" fill="#555">0</text><text x="389.4" y="9" text-anchor="middle" font-family="Liberation Sans" font-size="9.5" fill="#555">1</text><text x="417.9" y="9" text-anchor="middle" font-family="Liberation Sans" font-size="9.5" fill="#555">2</text><text x="446.4" y="9" text-anchor="middle" font-family="Liberation Sans" font-size="9.5" fill="#555">3</text><text x="474.8" y="9" text-anchor="middle" font-family="Liberation Sans" font-size="9.5" fill="#555">4</text><text x="503.2" y="9" text-anchor="middle" font-family="Liberation Sans" font-size="9.5" fill="#555">5</text><text x="531.7" y="9" text-anchor="middle" font-family="Liberation Sans" font-size="9.5" fill="#555">6</text><text x="560.1" y="9" text-anchor="middle" font-family="Liberation Sans" font-size="9.5" fill="#555">7</text><text x="588.6" y="9" text-anchor="middle" font-family="Liberation Sans" font-size="9.5" fill="#555">8</text><text x="617.0" y="9" text-anchor="middle" font-family="Liberation Sans" font-size="9.5" fill="#555">9</text><text x="645.5" y="9" text-anchor="middle" font-family="Liberation Sans" font-size="9.5" fill="#555">10</text><text x="674.0" y="9" text-anchor="middle" font-family="Liberation Sans" font-size="9.5" fill="#555">11</text><text x="702.4" y="9" text-anchor="middle" font-family="Liberation Sans" font-size="9.5" fill="#555">12</text><rect x="5.4" y="3" width="1" height="4" fill="#666"/><rect x="12.5" y="5" width="1" height="1" fill="#999"/><rect x="33.8" y="3" width="1" height="4" fill="#666"/><rect x="26.7" y="5" width="1" height="1" fill="#999"/><rect x="40.9" y="5" width="1" height="1" fill="#999"/><rect x="62.3" y="3" width="1" height="4" fill="#666"/><rect x="55.2" y="5" width="1" height="1" fill="#999"/><rect x="69.4" y="5" width="1" height="1" fill="#999"/><rect x="90.7" y="3" width="1" height="4" fill="#666"/><rect x="83.6" y="5" width="1" height="1" fill="#999"/><rect x="97.8" y="5" width="1" height="1" fill="#999"/><rect x="119.2" y="3" width="1" height="4" fill="#666"/><rect x="112.1" y="5" width="1" height="1" fill="#999"/><rect x="126.3" y="5" width="1" height="1" fill="#999"/><rect x="147.6" y="3" width="1" height="4" fill="#666"/><rect x="140.5" y="5" width="1" height="1" fill="#999"/><rect x="154.7" y="5" width="1" height="1" fill="#999"/><rect x="176.1" y="3" width="1" height="4" fill="#666"/><rect x="169.0" y="5" width="1" height="1" fill="#999"/><rect x="183.2" y="5" width="1" height="1" fill="#999"/><rect x="204.5" y="3" width="1" height="4" fill="#666"/><rect x="197.4" y="5" width="1" height="1" fill="#999"/><rect x="211.6" y="5" width="1" height="1" fill="#999"/><rect x="233.0" y="3" width="1" height="4" fill="#666"/><rect x="225.9" y="5" width="1" height="1" fill="#999"/><rect x="240.1" y="5" width="1" height="1" fill="#999"/><rect x="261.4" y="3" width="1" height="4" fill="#666"/><rect x="254.3" y="5" width="1" height="1" fill="#999"/><rect x="268.5" y="5" width="1" height="1" fill="#999"/><rect x="289.9" y="3" width="1" height="4" fill="#666"/><rect x="282.8" y="5" width="1" height="1" fill="#999"/><rect x="297.0" y="5" width="1" height="1" fill="#999"/><rect x="318.3" y="3" width="1" height="4" fill="#666"/><rect x="311.2" y="5" width="1" height="1" fill="#999"/><rect x="325.4" y="5" width="1" height="1" fill="#999"/><rect x="346.8" y="3" width="1" height="4" fill="#666"/><rect x="339.7" y="5" width="1" height="1" fill="#999"/><rect x="353.9" y="5" width="1" height="1" fill="#999"/><rect x="375.2" y="3" width="1" height="4" fill="#666"/><rect x="368.1" y="5" width="1" height="1" fill="#999"/><rect x="382.3" y="5" width="1" height="1" fill="#999"/><rect x="403.7" y="3" width="1" height="4" fill="#666"/><rect x="396.6" y="5" width="1" height="1" fill="#999"/><rect x="410.8" y="5" width="1" height="1" fill="#999"/><rect x="432.1" y="3" width="1" height="4" fill="#666"/><rect x="425.0" y="5" width="1" height="1" fill="#999"/><rect x="439.2" y="5" width="1" height="1" fill="#999"/><rect x="460.6" y="3" width="1" height="4" fill="#666"/><rect x="453.5" y="5" width="1" height="1" fill="#999"/><rect x="467.7" y="5" width="1" height="1" fill="#999"/><rect x="489.0" y="3" width="1" height="4" fill="#666"/><rect x="481.9" y="5" width="1" height="1" fill="#999"/><rect x="496.1" y="5" width="1" height="1" fill="#999"/><rect x="517.5" y="3" width="1" height="4" fill="#666"/><rect x="510.4" y="5" width="1" height="1" fill="#999"/><rect x="524.6" y="5" width="1" height="1" fill="#999"/><rect x="545.9" y="3" width="1" height="4" fill="#666"/><rect x="538.8" y="5" width="1" height="1" fill="#999"/><rect x="553.0" y="5" width="1" height="1" fill="#999"/><rect x="574.4" y="3" width="1" height="4" fill="#666"/><rect x="567.3" y="5" width="1" height="1" fill="#999"/><rect x="581.5" y="5" width="1" height="1" fill="#999"/><rect x="602.8" y="3" width="1" height="4" fill="#666"/><rect x="595.7" y="5" width="1" height="1" fill="#999"/><rect x="609.9" y="5" width="1" height="1" fill="#999"/><rect x="631.3" y="3" width="1" height="4" fill="#666"/><rect x="624.2" y="5" width="1" height="1" fill="#999"/><rect x="638.4" y="5" width="1" height="1" fill="#999"/><rect x="659.7" y="3" width="1" height="4" fill="#666"/><rect x="652.6" y="5" width="1" height="1" fill="#999"/><rect x="666.8" y="5" width="1" height="1" fill="#999"/><rect x="688.2" y="3" width="1" height="4" fill="#666"/><rect x="681.1" y="5" width="1" height="1" fill="#999"/><rect x="695.3" y="5" width="1" height="1" fill="#999"/><rect x="716.6" y="3" width="1" height="4" fill="#666"/><rect x="709.5" y="5" width="1" height="1" fill="#999"/></svg>
  <!-- right scrollbar -->
  <div class="a" style="left:1366px;top:130px;width:6px;height:596px;background:#dcdcdd"></div>
  <div class="a" style="left:1366px;top:137px;width:6px;height:12px;background:#fff;border:1px solid #c8c8c8"></div>
  <div class="a" style="left:1366px;top:507px;width:6px;height:50px;background:#fff;border:1px solid #c8c8c8"></div>
  <!-- slide shadow border -->
  <div class="a" style="left:469px;top:163px;width:726px;height:545px;background:#d6d5d8"></div>
  <div class="slide" id="s8main" style="left:470px;top:164px">
   <div class="shead"></div>
   <div class="stri"></div>
   <svg class="sv" style="left:6px;top:6px" width="74" height="90">
    <path d="M1 1h72v73l-36 15-36-15z" fill="#1c9ba6" stroke="#d8cf62" stroke-width="1.2"/>
    <text x="37" y="8" text-anchor="middle" font-family="Liberation Sans" font-size="5.2" font-weight="bold" fill="#d8ecd0">Київський університет</text><text x="37" y="14" text-anchor="middle" font-family="Liberation Sans" font-size="5.2" font-weight="bold" fill="#d8ecd0">імені Бориса Грінченка</text>
    <path d="M10 16.5h54" stroke="#d8cf62" stroke-width="1"/>
    <defs><linearGradient id="gold" x1="0" y1="0" x2="0" y2="1"><stop offset="0" stop-color="#fff8d0"/><stop offset="1" stop-color="#e2c456"/></linearGradient></defs>
    <path d="M37 22l-5 6h10z" fill="#f4f0c0"/>
    <path d="M37 28L12 56h50z" stroke="#d8f0d8" stroke-width="1" fill="none"/>
    <path d="M37 28v26" stroke="#d8f0d8" stroke-width="1.2"/>
    <path d="M14 52c8-5 16-4 23 1 7-5 15-6 23-1" stroke="#d8f0d8" stroke-width="1" fill="none"/>
    <path d="M6 57l26 2-5 6H12zM68 57l-26 2 5 6h15zM15 66l17-5-5 11h-8zM59 66l-17-5 5 11h8zM37 60l9 11-9 10-9-10z" fill="url(#gold)"/>
    <text x="37" y="86.5" text-anchor="middle" font-family="Liberation Sans" font-size="6.2" font-weight="bold" fill="#e8f0d8">1874</text>
   </svg>
   <div class="stitle">ЯКЩО СТАВСЯ ВИБУХ:</div>
   <svg class="sv" style="left:28px;top:187px;filter:blur(1.3px)" width="224" height="286">
    <defs>
     <pattern id="brick" width="8" height="6" patternUnits="userSpaceOnUse">
      <rect width="8" height="6" fill="#ececee"/>
      <path d="M0 5.5h8M4 0v5.5" stroke="#8e8e92" stroke-width="1"/>
     </pattern>
    </defs>
    <rect width="224" height="286" fill="url(#brick)"/>
    <rect x="0" y="0" width="6" height="286" fill="#c4cad6"/>
    <rect x="26" y="0" width="100" height="52" fill="#e6e6e8"/>
    <path d="M0 37L119 3" stroke="#3a3a3a" stroke-width="2.2"/>
    <path d="M82.5 0v52" stroke="#777" stroke-width="2"/>
    <path d="M112 0h40v44h-40c5-15 6-30 0-44z" fill="#7a6a5c"/>
    <rect x="148" y="0" width="33" height="200" fill="#3e3e40"/>
    <rect x="150" y="0" width="12" height="200" fill="#2e2e30"/>
    <rect x="212" y="0" width="12" height="90" fill="#b3574a"/>
    <rect x="212" y="90" width="12" height="135" fill="#bfc0c4"/>
    <path d="M214 100h8v120h-8z" fill="none" stroke="#777" stroke-width="1.5"/>
    <path d="M26 44h127v30H26z" fill="#5c5c5e"/>
    <path d="M26 44h127" stroke="#9a9a9c" stroke-width="3"/>
    <path d="M40 74h108v137H62C52 170 45 120 40 74z" fill="#4e4e50"/><path d="M100 74c20 10 30 40 40 60l8-60z" fill="#3a3a3c"/>
    <path d="M40 74c8 40 12 90 22 137h-8C46 160 40 110 36 74z" fill="#a0a0a2"/>
    <rect x="70" y="101" width="70" height="107" fill="#121212"/>
    <path d="M169 56l31 36M169 56l-27 143M176 75l-24 124" stroke="#d8d8da" stroke-width="3" fill="none"/>
    <ellipse cx="183" cy="145" rx="17.5" ry="42" fill="#dcdce2"/>
    <ellipse cx="186" cy="142" rx="12" ry="34" fill="#eeeef2"/>
    <path d="M26 211h127v23H26z" fill="#7c7c7e"/>
    <path d="M26 212h127" stroke="#d4d4d6" stroke-width="3"/>
    <rect x="29" y="234" width="107" height="30" fill="#4a4642"/>
    <path d="M40 234v30M55 234v30M70 234v30M85 234v30M100 234v30M115 234v30M29 248h107" stroke="#9a9088" stroke-width="1.8"/>
    <rect x="136" y="228" width="17" height="58" fill="#c8c8cc"/>
    <rect x="153" y="205" width="71" height="81" fill="#a8a8ac"/>
    <rect x="171" y="245" width="53" height="15" fill="#e34a30"/>
    <rect x="171" y="245" width="14" height="15" fill="#f0f0f0" opacity=".5"/>
    <rect x="6" y="260" width="119" height="24" fill="#e34a2a"/>
    <rect x="6" y="262" width="17" height="22" fill="#c62a16"/>
    <text x="8" y="278" font-family="Liberation Sans" font-size="8" font-weight="bold" fill="#fff">ТСН</text>
    <text x="0" y="0" font-family="Liberation Sans" font-size="10.5" font-weight="bold" fill="#fff" transform="translate(25 277) scale(.74 1)">ВИБУХ У БАГАТОПОВЕРХІВЦІ</text>
   </svg>
   <div class="bul" style="left:279.8px;top:179.5px"></div>
   <div class="bul" style="left:279.8px;top:296px"></div>
   <div class="bul" style="left:279.8px;top:435px"></div>
   <div class="stext" style="top:179px">уважно озирнутися навколо, щоб з’ясувати вірогідність небезпеки подальших обвалів і вибухів, чи не висить з руїн розбите скло, чи не потрібна комусь допомога;</div>
   <div class="stext" style="top:295px;width:395px;text-align:left">якщо є можливість – спокійно вийти з місця пригоди. Опинившись під завалами – подавати звукові сигнали. <span style="color:#1b6fc2">Пам’ятайте</span>, що за низької активності людина може вижити без води упродовж п’яти днів;</div>
   <div class="stext" style="top:434px;text-align:left">виконати всі інструкції рятувальників.</div>
   <div class="sfoot"></div>
   <div class="sft" style="left:36px">ПІБ доповідача, посада</div>
   <div class="sft" style="left:582px;font-weight:bold;font-size:9.3px">05.04.2021</div>
  </div>

  <!-- WINDOWS WATERMARK -->
  <div class="a" style="left:1013px;top:650.5px;font-size:17.1px;color:rgba(150,150,150,.55);white-space:nowrap">Активация Windows</div>
  <div class="a" style="left:1013px;top:671.5px;font-size:12.9px;color:rgba(150,150,150,.55);white-space:nowrap">Чтобы активировать Windows, перейдите в раздел</div>
  <div class="a" style="left:1013px;top:689px;font-size:12.9px;color:rgba(150,150,150,.55);white-space:nowrap">"Параметры".</div>
  <svg class="sv" style="left:1331px;top:297px" width="14" height="20"><path d="M1.5 1.5v14.5l3.6-3.4 2.4 5.6 2.4-1-2.4-5.5h5z" fill="#fff" stroke="#111" stroke-width="1.1" stroke-linejoin="round"/></svg>
  <!-- STATUS BAR -->
  <div class="a" style="left:0;top:723px;width:1374px;height:16px;background:#f2f1f3;border-top:1px solid #d6d5d8;overflow:hidden">
   <div class="st" style="left:1px">Слайд 8 из 10</div>
   <svg class="sv" style="left:77px;top:3px" width="16" height="12"><path d="M1.5 1.5h5l1 1v10h-6zM8 2.5l1.5-1h4v11H8" fill="none" stroke="#777"/><path d="M9 9l4-6" stroke="#777"/></svg>
   <div class="st" style="left:104px">русский (Украина)</div>
   <svg class="sv" style="left:904px;top:3px" width="14" height="12"><path d="M2 4h9M2 7h9M2 10h9M5 1.5l1.5-1 1.5 1" stroke="#555" fill="none"/></svg>
   <div class="st" style="left:917px">Заметки</div>
   <svg class="sv" style="left:973px;top:3px" width="14" height="12"><path d="M1.5 1.5h11v7h-8l-3 3z" fill="#555"/></svg>
   <div class="st" style="left:988px">Примечания</div>
   <div class="a" style="left:1065px;top:1px;width:30px;height:15px;background:#c9c8cb"></div>
   <svg class="sv" style="left:1065px;top:2px" width="140" height="13"><g fill="none" stroke="#666"><rect x="9.5" y="2.5" width="11" height="9"/><path d="M12 5h6M12 7.5h6"/><rect x="45.5" y="2.5" width="4" height="4"/><rect x="51.5" y="2.5" width="4" height="4"/><rect x="45.5" y="8.5" width="4" height="4"/><rect x="51.5" y="8.5" width="4" height="4"/><path d="M81.5 3v9M81.5 3c-2-1-4-1-5 0v9c1-1 3-1 5 0 2-1 4-1 5 0V3c-1-1-3-1-5 0"/><path d="M111 3h13M112.5 3v7h10V3M117.5 10v3"/></g></svg>
   <svg class="sv" style="left:1205px;top:2px" width="166" height="13"><path d="M2 7.5h6M12 7.5h88M104 7.5h7M107.5 4v7" stroke="#777" fill="none"/><rect x="49" y="3" width="3" height="10" fill="#555"/><rect x="154.5" y="2.5" width="9" height="9" fill="none" stroke="#777"/></svg>
   <div class="st" style="left:1325px">88%</div>
  </div>
  <!-- INNER TASKBAR -->
  <div class="a" style="left:0;top:739px;width:1374px;height:33px;background:#0f2428">
   <div class="a" style="left:1004px;top:0;width:131px;height:34px;background:#2c6770"></div>
   <div class="ul" style="left:129px;width:126px"></div>
   <div class="ul" style="left:304px;width:126px"></div>
   <div class="ul" style="left:480px;width:126px"></div>
   <div class="ul" style="left:612px;width:126px"></div>
   <div class="ul" style="left:745px;width:126px"></div>
   <div class="ul" style="left:877px;width:125px"></div>
   <div class="ul" style="left:1004px;width:131px;background:#bfe7ea"></div>
   <div class="a" style="left:1371px;top:0;width:1px;height:33px;background:#4a7a80"></div>
   <svg class="sv" style="left:0;top:0" width="1371" height="34">
    <g fill="#fff"><rect x="12.5" y="10" width="6.5" height="6.3"/><rect x="20" y="9" width="7" height="7.3"/><rect x="12.5" y="17.3" width="6.5" height="6.3"/><rect x="20" y="17.3" width="7" height="7.3"/></g>
    <circle cx="63" cy="14" r="4.8" fill="none" stroke="#fff" stroke-width="1.4"/><path d="M59.5 17.5l-4.5 5" stroke="#fff" stroke-width="1.6"/>
    <circle cx="102.3" cy="16.5" r="6" fill="none" stroke="#fff" stroke-width="1.8"/>
    <path d="M137 9h6l3 2v13l-9 1z" fill="#f1cf5a"/><path d="M137 9v16" stroke="#d3a83a"/>
    <circle cx="279" cy="16.5" r="8.5" fill="#1b8ad6"/><path d="M272 19c1-6 10-8 14-2-3-1-9 0-8 4 1 3 6 3 8 1-3 5-12 5-14-3z" fill="#45d07a"/><circle cx="280" cy="18" r="3" fill="#0f2428"/>
    <path d="M319.5 7c4 5 7 8 7 12a7 7 0 0 1-14 0c0-4 3-7 7-12z" fill="#c46ae0"/><path d="M319.5 13c2 3 5 5 5 8a5 5 0 0 1-9 0c0-3 2-5 4-8z" fill="#f59a4a"/><circle cx="316" cy="20" r="3" fill="#4f9be8"/>
    <rect x="445" y="8" width="17" height="19" fill="#3a8ad0"/><rect x="447" y="10" width="13" height="4" fill="#cfe6fa"/><g fill="#fff"><rect x="447" y="16" width="3" height="3"/><rect x="452" y="16" width="3" height="3"/><rect x="447" y="21" width="3" height="3"/><rect x="452" y="21" width="3" height="3"/></g><rect x="457" y="16" width="3" height="8" fill="#1d5aa0"/>
    <path d="M486 8h14a4 4 0 0 1 4 4v8a4 4 0 0 1-4 4h-7l-4 3v-3h-3a4 4 0 0 1-4-4v-8a4 4 0 0 1 4-4z" fill="#7a58c8"/><path d="M489 12c1 5 4 8 9 9l1-2-2-1-1 1c-2-1-4-3-5-5l1-1-1-2z" fill="#fff"/>
    <circle cx="626" cy="17" r="8.5" fill="#e0463a"/><path d="M626 17L617.5 17A8.5 8.5 0 0 0 630 24.4z" fill="#2ea84f"/><path d="M626 17l8.5 0A8.5 8.5 0 0 1 630 24.4z" fill="#f6c33a"/><circle cx="626" cy="17" r="3.8" fill="#fff"/><circle cx="626" cy="17" r="2.8" fill="#4586f0"/>
    <circle cx="759" cy="17" r="8.5" fill="#e0463a"/><path d="M759 17L750.5 17A8.5 8.5 0 0 0 763 24.4z" fill="#2ea84f"/><path d="M759 17l8.5 0A8.5 8.5 0 0 1 763 24.4z" fill="#f6c33a"/><circle cx="759" cy="17" r="3.8" fill="#fff"/><circle cx="759" cy="17" r="2.8" fill="#4586f0"/>
    <rect x="885" y="8" width="16" height="18" rx="1" fill="#2b5fb4"/><rect x="880" y="11" width="11" height="11" fill="#1a4a9a"/><text x="881.5" y="20.5" font-family="Liberation Sans" font-weight="bold" font-size="9" fill="#fff">W</text>
    <circle cx="1021" cy="17" r="8.5" fill="#e06a45"/><rect x="1012" y="11" width="10" height="11" fill="#c43e1c"/><text x="1014" y="20.5" font-family="Liberation Sans" font-weight="bold" font-size="9" fill="#fff">P</text>
    <path d="M1142 19l5-5 5 5" fill="none" stroke="#fff" stroke-width="1.3"/>
    <rect x="1165.5" y="9" width="5" height="10" rx="2.5" fill="#fff"/><path d="M1163.5 16a4.5 4.5 0 0 0 9 0M1168 20.5v3M1165 24h6" stroke="#fff" fill="none"/>
    <rect x="1186.5" y="12.5" width="10" height="7" fill="none" stroke="#fff"/><rect x="1188" y="14" width="7" height="4" fill="#fff"/><path d="M1197 15v2" stroke="#fff" stroke-width="1.5"/><path d="M1183 12l2 1" stroke="#fff"/>
    <rect x="1203.5" y="10.5" width="12" height="8" fill="none" stroke="#fff"/><path d="M1209.5 18.5v3M1206 22h7M1201 14v8h4" stroke="#fff" fill="none"/>
    <path d="M1224 14h3l4-4v14l-4-4h-3z" fill="none" stroke="#fff"/><path d="M1234 13a5 5 0 0 1 0 8M1237 10a9 9 0 0 1 0 14" stroke="#fff" fill="none"/>
    <path d="M1340 9.5h12v9h-6l-3 3v-3h-3z" fill="none" stroke="#fff" stroke-width="1.2"/><path d="M1342.5 12.5h7M1342.5 15h7" stroke="#fff"/>
    <circle cx="1351" cy="21" r="6.5" fill="#2a9aaa" stroke="#0f2428" stroke-width="1"/><text x="1348" y="24.5" font-family="Liberation Sans" font-size="9" fill="#fff">2</text>
   </svg>
   <div class="tt" style="left:158px">Сохраненные фо...</div>
   <div class="tt" style="left:333px">Без имени* - Pain...</div>
   <div class="tt" style="left:509px">Viber</div>
   <div class="tt" style="left:640px">Meet: "Час курат...</div>
   <div class="tt" style="left:772px">Приложению me...</div>
   <div class="tt" style="left:904px">Документ1 - Word</div>
   <div class="tt" style="left:1037px">Обережно, вибух...</div>
   <div class="tt" style="left:1247px;font-size:10.2px">УКР</div>
   <div class="tt" style="left:1289px;top:3px;font-size:9.3px">13:34</div>
   <div class="tt" style="left:1278px;top:18px;font-size:9.3px">05.04.2021</div>
  </div>
  <!-- NOTIFICATION BAR -->
  <div class="a" style="left:426px;top:695px;width:522px;height:36px;background:#fff;border:1px solid #dedede;box-shadow:0 1px 3px rgba(0,0,0,.2)">
   <svg class="sv" style="left:8px;top:12px" width="6" height="12"><path d="M1.5 0v12M4.5 0v12" stroke="#c8c8c8"/></svg>
   <div class="a" style="left:22px;top:10px;font-size:10.3px;color:#3c4043;white-space:nowrap">Приложению meet.google.com предоставлен доступ к вашему экрану.</div>
   <div class="a" style="left:365px;top:3px;width:104px;height:27px;background:#1a73e8;border-radius:4px;color:#fff;font-size:10.2px;font-weight:bold;text-align:center;line-height:27px">Закрыть доступ</div>
   <div class="a" style="left:478px;top:10px;font-size:10.2px;color:#3b82e8;white-space:nowrap">Скрыть</div>
  </div>
  <!-- RIBBON CONTENT (ppt-local coords: y = abs-108) -->
  <svg class="sv" style="left:0;top:47px" width="1374" height="81">
   <!-- paste -->
   <rect x="12" y="12" width="18" height="21" rx="1" fill="#f0c26a"/>
   <rect x="17" y="9" width="8" height="5" rx="1" fill="#7b7b7b"/>
   <path d="M23 19h8l4 4v12H23z" fill="#fff" stroke="#8a8a8a" stroke-width="1"/>
   <path d="M17.5 57l2.5 2.5 2.5-2.5z" fill="#555"/>
   <!-- cut/copy/painter (disabled gray) -->
   <g fill="none" stroke="#b9b9b9" stroke-width="1.2">
    <circle cx="51.5" cy="26.5" r="2"/><circle cx="58.5" cy="26.5" r="2"/>
    <path d="M52.5 24.5L57 14M57.5 24.5L53 14"/>
    <rect x="48.5" y="37.5" width="7" height="9"/><rect x="52.5" y="40.5" width="7" height="9"/>
    <path d="M67 41.5l2 2 2-2" stroke-width="1"/>
   </g>
   <path d="M50 59l8-6 3 3-6 6z" fill="#c2c2c2"/>
   <!-- separators -->
   <rect x="82" y="4" width="1" height="72" fill="#dcdbdd"/>
   <rect x="226" y="4" width="1" height="72" fill="#dcdbdd"/>
   <rect x="457" y="4" width="1" height="72" fill="#dcdbdd"/>
   <rect x="629" y="4" width="1" height="72" fill="#dcdbdd"/>
   <rect x="997" y="4" width="1" height="72" fill="#dcdbdd"/>
   <rect x="1092" y="4" width="1" height="72" fill="#dcdbdd"/>
   <rect x="1269" y="4" width="1" height="72" fill="#dcdbdd"/>
   <!-- new slide -->
   <rect x="98.5" y="11.5" width="23" height="18" fill="#fff" stroke="#8c8c8c"/>
   <rect x="101" y="15" width="18" height="4" fill="#c8c8c8"/>
   <path d="M102 23.5h16M102 26.5h16" stroke="#bdbdbd"/>
   <circle cx="101" cy="11" r="3.5" fill="#f5d870"/>
   <path d="M97 7l8 8M105 7l-8 8" stroke="#f3d070" stroke-width="1"/>
   <path d="M123 55l2.5 2.5 2.5-2.5z" fill="#555"/>
   <g transform="translate(0 -5)">
   <!-- layout/reset/section icons -->
   <rect x="134.5" y="13.5" width="13" height="11" fill="#fff" stroke="#777"/>
   <path d="M136.5 16.5h4M136.5 19.5h4M136.5 22h4M142 16.5h4M142 19.5h4" stroke="#9a9a9a"/>
   <rect x="135.5" y="33.5" width="12" height="10" fill="#fff" stroke="#777"/>
   <path d="M134 34.5a4 4 0 0 1 6-2" fill="none" stroke="#2f6fb5" stroke-width="1.6"/>
   <rect x="137.5" y="53.5" width="10" height="4" fill="#fff" stroke="#777"/>
   <rect x="137.5" y="58.5" width="10" height="6" fill="#fff" stroke="#777"/>
   <path d="M134 51.5h6" stroke="#f0b86a" stroke-width="1.5"/>
   
   </g>
   <!-- font boxes -->
   <rect x="234.5" y="10.5" width="108" height="20" fill="#e9e8ea" stroke="#d6d5d7"/>
   <rect x="345.5" y="10.5" width="39" height="20" fill="#e9e8ea" stroke="#d6d5d7"/>
   <path d="M338 20l2 2 2-2M379 20l2 2 2-2" stroke="#bbb" fill="none"/>
   <g font-family="Liberation Sans" fill="#b2b2b2">
    <text x="392" y="26" font-size="11">A</text><text x="401" y="20" font-size="6">^</text>
    <text x="411" y="26" font-size="9">A</text><text x="419" y="19" font-size="6">ˇ</text>
    <text x="238" y="52" font-size="11" font-weight="bold">Ж</text>
    <text x="257" y="52" font-size="11" font-weight="bold" font-style="italic">К</text>
    <text x="277" y="52" font-size="11" font-weight="bold" text-decoration="underline">Ч</text>
    <text x="296" y="52" font-size="11" font-weight="bold">S</text>
    <text x="312" y="51" font-size="9">abc</text>
    <text x="331" y="49" font-size="9">AV</text>
    <text x="359" y="52" font-size="11">Aa</text>
    <text x="425" y="52" font-size="13">A</text>
   </g>
   <path d="M332 53h10M334 51l-2 2 2 2M340 51l2 2-2 2" stroke="#b2b2b2" fill="none" stroke-width=".8"/>
   <path d="M438 13l6 6-4 4-6-6z" fill="#c9c9c9"/>
   <path d="M396 48l7-7 3 3-7 7z" fill="#c9c9c9"/>
   <path d="M398 54h9" stroke="#d8d8d8" stroke-width="2"/>
   <path d="M349 47l2 2 2-2M382 47l2 2 2-2M414 47l2 2 2-2M444 47l2 2 2-2" stroke="#bbb" fill="none"/>
   <!-- paragraph icons -->
   <g stroke="#b7b7b7" stroke-width="1.1" fill="none">
    <path d="M474 17h9M474 21h9M474 25h9M514 17h8M514 21h8M514 25h8"/>
    <path d="M505 17h8M505 21h8M505 25h8"/>
    <path d="M536 16h10M540 20h6M540 24h6M536 28h10M552 16h10M552 20h6M552 24h6M552 28h10"/>
    <path d="M582 16h8M582 20h8M582 24h8M582 28h8M578 15v13M576 17l2-2 2 2M576 26l2 2 2-2"/>
    <path d="M603 16v12M607 16v12M611 16v12M604 18h8"/>
    <path d="M470 47h13M470 50h9M470 53h13M470 56h9"/>
    <path d="M487 47h13M489 50h9M487 53h13M489 56h9"/>
    <path d="M505 47h13M509 50h9M505 53h13M509 56h9"/>
    <path d="M524 47h13M524 50h13M524 53h13M524 56h13"/>
    <path d="M548 47h6M556 47h6M548 51h6M556 51h6M548 55h6M556 55h6"/>
    <rect x="599.5" y="36.5" width="12" height="11"/>
    <rect x="602.5" y="58.5" width="10" height="8"/>
    <path d="M597 56h10"/>
   </g>
   <g fill="#b7b7b7"><circle cx="471" cy="17" r="1.2"/><circle cx="471" cy="21" r="1.2"/><circle cx="471" cy="25" r="1.2"/></g>
   <path d="M489 20l2 2 2-2M523 20l2 2 2-2M593 20l2 2 2-2M620 18l2 2 2-2M620 40l2 2 2-2M566 50l2 2 2-2M620 63l2 2 2-2" stroke="#c0c0c0" fill="none"/>
   <g transform="translate(0 -4)">
   <!-- shapes gallery -->
   <rect x="636.5" y="9.5" width="117" height="56" fill="#fff" stroke="#d6d6d6"/>
   <rect x="743.5" y="9.5" width="10" height="56" fill="#f4f4f4" stroke="#d6d6d6"/>
   <g fill="none" stroke="#555" stroke-width="1">
    <rect x="641.5" y="13.5" width="12" height="9"/><path d="M644 16h3M644 18.5h7M644 20.5h7"/>
    <path d="M659 13l10 10M677 13l9 9M684 19v3h-3"/>
    <rect x="692.5" y="14.5" width="12" height="9"/>
    <ellipse cx="716" cy="19" rx="7" ry="5"/>
    <rect x="727.5" y="14.5" width="12" height="9" rx="2"/>
    <path d="M642 42l6-10 6 10zM659 31h4v10h5M677 31h3v10h4M682 39l2 2-2 2M693 33h6v-3l5 5-5 5v-3h-6zM712 30h6v5h3l-6 6-6-6h3zM729 41v-9h6a4 4 0 0 1 4 5v4z"/>
    <path d="M645 50c3-2-2 5 2 3s-1 6 1 5M658 49c5 0 9 3 10 8M674 57c2-8 5-8 6-4s4 4 6 5M694 50c-2 0-1 3-2 4 1 1 0 4 2 4M711 50c2 0 1 3 2 4-1 1 0 4-2 4"/>
    <path d="M733.5 47l2 4 4 .5-3 3 1 4-4-2-4 2 1-4-3-3 4-.5z"/>
   </g>
   <path d="M747 36l2 2 2-2M746 57h6M747 60l2 2 2-2" stroke="#777" fill="none"/>
   <rect x="744" y="10" width="9" height="18" fill="#e4e4e4"/>
   </g>
   <!-- arrange -->
   <rect x="779.5" y="9.5" width="8" height="8" fill="#fff" stroke="#666"/>
   <rect x="783" y="14" width="13" height="13" fill="#f2c471"/>
   <rect x="791.5" y="22.5" width="8" height="8" fill="#fff" stroke="#666"/>
   <path d="M789 60l2 2 2-2z" fill="#555"/>
   <!-- quick styles disabled -->
   <rect x="838.5" y="11.5" width="22" height="22" rx="5" fill="none" stroke="#d8d8d8" stroke-width="1.5"/>
   <path d="M848 33l14-12 2 2-12 13z" fill="#d0d0d0"/>
   <path d="M864.5 63.5l1.5 1.5 1.5-1.5z" fill="#c8c8c8"/>
   <!-- shape fill etc disabled icons -->
   <g fill="none" stroke="#d4d4d4" stroke-width="1.3">
    <path d="M884 11l6 5-4 5-6-5zM883 10l3-2"/>
    <path d="M881 32h9v8h-9zM885 38l7-7"/>
    <ellipse cx="886" cy="52" rx="5" ry="4"/>
   </g>
   <path d="M976 12l2 2 2-2M971 32l2 2 2-2M983 52l2 2 2-2" stroke="#d0d0d0" fill="none"/>
   <!-- editing icons -->
   <circle cx="1016.5" cy="13.5" r="3.5" fill="none" stroke="#2f6fb5" stroke-width="1.5"/>
   <path d="M1014 16l-4 4" stroke="#2f6fb5" stroke-width="1.8"/>
   <text x="1009" y="31" font-family="Liberation Sans" font-size="7" fill="#444">ab</text>
   <text x="1013" y="39" font-family="Liberation Sans" font-size="7" fill="#2f6fb5">ac</text>
   <path d="M1013 48v11l3-3 2 4 1.5-1-2-4h4z" fill="#fff" stroke="#555" stroke-width=".9"/>
   <path d="M1079 33l2 2 2-2M1073 53l2 2 2-2" stroke="#555" fill="none"/>
   <!-- acrobat -->
   <path d="M1147.5 11.5h8l4 4v12h-12z" fill="none" stroke="#1e6cc6" stroke-width="1.4"/>
   <path d="M1153 24v-6M1150.5 20.5l2.5-2.5 2.5 2.5M1150 26h6" stroke="#1e6cc6" stroke-width="1.3" fill="none"/>
   <circle cx="1234" cy="13" r="4" fill="none" stroke="#1e6cc6" stroke-width="1.4"/>
   <path d="M1226 29c0-5 4-8 8-8M1238 24h9M1240 27l3-2 2 2 2-2" stroke="#1e6cc6" stroke-width="1.3" fill="none"/>
   <!-- dialog launchers -->
   <g fill="none" stroke="#aaa" stroke-width=".9">
    <path d="M71.5 71.5h6v6M73 73l4.5 4.5"/>
    <path d="M447.5 71.5h6v6M449 73l4.5 4.5"/>
    <path d="M619.5 71.5h6v6M621 73l4.5 4.5"/>
    <path d="M987.5 71.5h6v6M989 73l4.5 4.5"/>
   </g>
   <path d="M1364 77l4-4 4 4" stroke="#555" fill="none"/>
   <path d="M181.5 12.5l2.2 2.5 2.2-2.5z M184.5 51.5l2.2 2.5 2.2-2.5z" fill="#555"/>
  </svg>
  <div class="rb" style="left:2px;top:84px">Вставить</div>
  <div class="rb" style="left:91px;top:84px">Создать</div>
  <div class="rb" style="left:92px;top:98px">слайд</div>
  <div class="rb" style="left:149px;top:55px">Макет</div>
  <div class="rb" style="left:149px;top:75px">Восстановить</div>
  <div class="rb" style="left:149px;top:95px">Раздел</div>
  <div class="rb" style="left:760px;top:84px">Упорядочить</div>
  <div class="rb" style="left:826px;top:84px;color:#c6c6c6">Экспресс-</div>
  <div class="rb" style="left:833px;top:98px;color:#c6c6c6">стили</div>
  <div class="rb" style="left:895px;top:55px;color:#c6c6c6">Заливка фигуры</div>
  <div class="rb" style="left:895px;top:75px;color:#c6c6c6">Контур фигуры</div>
  <div class="rb" style="left:895px;top:95px;color:#c6c6c6">Эффекты фигуры</div>
  <div class="rb" style="left:1025px;top:55px">Найти</div>
  <div class="rb" style="left:1025px;top:75px">Заменить</div>
  <div class="rb" style="left:1025px;top:95px">Выделить</div>
  <div class="rb" style="left:1103px;top:84px">Создать и поделиться</div>
  <div class="rb" style="left:1129px;top:98px">Adobe PDF</div>
  <div class="rb" style="left:1209px;top:84px">Запросить</div>
  <div class="rb" style="left:1215px;top:98px">подписи</div>
  <div class="rg" style="left:-2px">Буфер обмена</div>
  <div class="rg" style="left:136px">Слайды</div>
  <div class="rg" style="left:316px">Шрифт</div>
  <div class="rg" style="left:522px">Абзац</div>
  <div class="rg" style="left:781px">Рисование</div>
  <div class="rg" style="left:1008px">Редактирование</div>
  <div class="rg" style="left:1147px">Adobe Acrobat</div>
</div>

<!-- GRID -->
<div id="grid" class="a"></div>
<div class="a" style="left:1374px;top:108px;width:546px;height:8px;background:#161617"></div>
<div class="a" style="left:1374px;top:874px;width:546px;height:6px;background:#121212"></div>
<div class="a" style="left:1374px;top:570px;width:546px;height:1px;background:#141415"></div>
<!-- presenter tile -->
<div class="a" style="left:1556px;top:116px;width:183px;height:151px;overflow:hidden;background:linear-gradient(90deg,#c2c0b6,#d2d0c6 25%,#dcdad0 75%,#d6d4ca)">
 <svg class="sv" style="left:0;top:0;filter:blur(1.3px)" width="183" height="151">
  <path d="M0 118c15-8 35-14 52-16l35 6 42-12c20 3 40 8 54 12v43H0z" fill="#2a3784"/>
  <path d="M0 122c20-8 38-12 52-18l8 47H0z" fill="#1e2a66"/>
  <path d="M47 40C45 12 65 0 90 0s42 12 42 40v48c0 25-15 30-40 30S52 110 48 88z" fill="#84686a"/>
  <path d="M52 20c8-15 25-18 40-18s32 5 38 18c-10-5-25-8-38-8s-30 3-40 8z" fill="#3a2e30"/>
  <ellipse cx="88" cy="38" rx="34" ry="22" fill="#96787a"/>
  <path d="M58 55c8-3 15-3 22 1M96 53c8-4 16-3 22 1" stroke="#4a3a3a" stroke-width="3.5" fill="none"/>
  <ellipse cx="92" cy="70" rx="9" ry="9" fill="#a08280"/>
  <path d="M82 88c8 3 20 4 28-1l-2 5c-8 3-18 3-24 0z" fill="#3a2a2a"/>
  <path d="M55 100c12 14 40 16 62 6l2-8c-20 10-45 10-62-4z" fill="#6e6262"/>
  <path d="M30 36C28 10 55-2 88-4s55 10 56 38" fill="none" stroke="#2e2e2e" stroke-width="2.2"/>
  <path d="M36 40C36 14 58 4 88 2s46 10 48 34" fill="none" stroke="#3a3a3a" stroke-width="1.6"/>
  <path d="M40 12l10 5-6 10z" fill="#d8d8e8"/>
  <rect x="25" y="49" width="27" height="55" rx="11" fill="#2c2e2c"/>
  <rect x="127" y="38" width="26" height="51" rx="11" fill="#2c2e2c"/>
  <rect x="132" y="86" width="16" height="6" rx="3" fill="#e6e8f2"/>
  <path d="M140 92c2 20 4 35 8 59" stroke="#9aa0c8" stroke-width="1.5" fill="none"/>
 </svg>
 <div class="a" style="left:0;top:100px;width:183px;height:51px;background:linear-gradient(rgba(0,0,0,0),rgba(0,0,0,.5) 75%)"></div>
 <svg class="sv" style="left:16px;top:120px" width="21" height="14"><rect x="0" y="3" width="5" height="7" rx="2.5" fill="#5ce1c4"/><rect x="7.5" y="0" width="6" height="13" rx="3" fill="#5ce1c4"/><rect x="15.5" y="3" width="5" height="7" rx="2.5" fill="#5ce1c4"/></svg>
 <div class="a" style="left:52px;top:116px;font-size:17.3px;color:#fff;white-space:nowrap;-webkit-text-stroke:.35px #fff">Вадим Воло...</div>
 <div class="a" style="left:0;top:144px;width:183px;height:7px;background:#5ff2d1"></div>
</div>
<!-- avatars -->
<svg class="sv" style="left:1438.0px;top:164.0px;filter:blur(1px)" width="55.0" height="55.0" viewBox="0 0 100 100"><defs><clipPath id="ac1"><circle cx="50" cy="50" r="50"/></clipPath></defs><g clip-path="url(#ac1)"><rect width="100" height="100" fill="#4a4240"/><path d="M15 100C10 60 20 10 55 8c30 0 45 30 40 92z" fill="#9a6048"/><ellipse cx="45" cy="42" rx="20" ry="26" fill="#d8aa98"/><path d="M55 10c25 5 35 40 30 90H65c10-30 5-60-10-90z" fill="#a86a4a"/><path d="M0 60l40 15-10 25H0z" fill="#3c3836"/><ellipse cx="30" cy="68" rx="10" ry="7" fill="#c89888"/></g></svg>
<svg class="sv" style="left:1801.2px;top:163.0px;filter:blur(1px)" width="55.0" height="55.0" viewBox="0 0 100 100"><defs><clipPath id="ac2"><circle cx="50" cy="50" r="50"/></clipPath></defs><g clip-path="url(#ac2)"><rect width="100" height="100" fill="#d4d4d4"/><path d="M5 20h25v25H5zM70 20h25v25H70zM5 55h25v30H5zM70 55h25v30H70z" fill="none" stroke="#333" stroke-width="4"/><path d="M15 30h8M80 30h8M15 65h8M80 65h8" stroke="#333" stroke-width="3"/><ellipse cx="52" cy="18" rx="6" ry="8" fill="#a86848"/><path d="M40 28h24l4 30-6 42H42l-6-42z" fill="#4a78c0"/><path d="M36 30l-8 20M64 30l8 20" stroke="#4a78c0" stroke-width="6"/></g></svg>
<svg class="sv" style="left:1438.0px;top:315.9px;filter:blur(1px)" width="55.0" height="55.0" viewBox="0 0 100 100"><defs><clipPath id="ac3"><circle cx="50" cy="50" r="50"/></clipPath></defs><g clip-path="url(#ac3)"><rect width="100" height="100" fill="#a8b890"/><rect width="100" height="30" fill="#c8cfc0"/><path d="M0 30c20-8 40-5 60 2s30 0 40-4v40H0z" fill="#8aaa68"/><path d="M0 60h100v40H0z" fill="#a0b8c0"/><path d="M30 30c0-18 40-18 40 0v40H30z" fill="#3a2a24"/><ellipse cx="50" cy="38" rx="11" ry="14" fill="#c89078"/><path d="M25 100c0-25 10-40 25-40s25 15 25 40z" fill="#7a98d8"/><path d="M25 70l-12 25M75 70l12 25" stroke="#c89078" stroke-width="6"/></g></svg>
<svg class="sv" style="left:1619.7px;top:315.9px;filter:blur(1px)" width="55.0" height="55.0" viewBox="0 0 100 100"><defs><clipPath id="ac4"><circle cx="50" cy="50" r="50"/></clipPath></defs><g clip-path="url(#ac4)"><rect width="100" height="100" fill="#b8b8b6"/><path d="M0 0h100v50H0z" fill="#c8c6c2"/><ellipse cx="45" cy="40" rx="20" ry="24" fill="#d8a888"/><path d="M25 30c0-20 40-22 42 0-10-8-30-8-42 0z" fill="#8a6040"/><path d="M10 100c0-20 15-32 35-32s40 12 40 32z" fill="#2e5aa8"/><path d="M32 70h28l-4 30H36z" fill="#1a2030"/><path d="M44 70h6l-1 30h-4z" fill="#e8e8f0"/></g></svg>
<svg class="sv" style="left:1801.7px;top:315.9px;filter:blur(1px)" width="55.0" height="55.0" viewBox="0 0 100 100"><defs><clipPath id="ac5"><circle cx="50" cy="50" r="50"/></clipPath></defs><g clip-path="url(#ac5)"><rect width="100" height="100" fill="#c0c0c0"/><path d="M0 0h40v100H0z" fill="#b0b4b8"/><path d="M25 100C20 50 35 15 60 15s40 30 30 85z" fill="#8a5a3a"/><ellipse cx="60" cy="55" rx="18" ry="24" fill="#e0b8a0"/><path d="M30 100c5-15 20-22 35-22s20 8 25 22z" fill="#e8c0a8"/><path d="M42 30c10-10 30-10 40 5-10-5-30-5-40-5z" fill="#9a6a48"/></g></svg>
<svg class="sv" style="left:1438.0px;top:466.9px;filter:blur(1px)" width="55.0" height="55.0" viewBox="0 0 100 100"><defs><clipPath id="ac6"><circle cx="50" cy="50" r="50"/></clipPath></defs><g clip-path="url(#ac6)"><rect width="100" height="100" fill="#f4f4f4"/><path d="M20 100C15 50 25 5 55 5s35 40 30 95z" fill="#b88860"/><ellipse cx="52" cy="35" rx="18" ry="24" fill="#e8c8b8"/><path d="M30 100c0-25 10-38 25-38s28 12 28 38z" fill="#eeeeee"/><path d="M35 10c10-5 30-5 38 5" stroke="#c89870" stroke-width="8" fill="none"/></g></svg>
<svg class="sv" style="left:1619.7px;top:466.9px;filter:blur(1px)" width="55.0" height="55.0" viewBox="0 0 100 100"><defs><clipPath id="ac7"><circle cx="50" cy="50" r="50"/></clipPath></defs><g clip-path="url(#ac7)"><rect width="100" height="100" fill="#6a5a54"/><path d="M60 0h40v100H60z" fill="#e8d0c0"/><path d="M10 100C5 40 20 5 45 5s35 25 30 60l-10 35z" fill="#1c1a22"/><ellipse cx="48" cy="38" rx="15" ry="20" fill="#d8b0a0"/><path d="M15 100c5-25 20-38 38-38s30 15 35 38z" fill="#8a8684"/><path d="M0 60l25 10-5 30H0z" fill="#1a1a50"/></g></svg>
<div class="av" style="left:1801.7px;top:466.5px;width:55px;height:55px;background:#a94cc8"></div>
<div class="a" style="left:1801.7px;top:466px;width:55px;height:55px;text-align:center;line-height:56px;font-size:28px;color:#fff">M</div>
<svg class="sv" style="left:1438.0px;top:619.9px;filter:blur(1px)" width="55.0" height="55.0" viewBox="0 0 100 100"><defs><clipPath id="ac9"><circle cx="50" cy="50" r="50"/></clipPath></defs><g clip-path="url(#ac9)"><rect width="100" height="100" fill="#4a90e0"/><ellipse cx="15" cy="55" rx="30" ry="35" fill="#c8b8e8"/><ellipse cx="88" cy="60" rx="28" ry="30" fill="#d8c0e8"/><path d="M35 100c0-50 5-70 18-70s20 20 20 70z" fill="#2a2230"/><ellipse cx="52" cy="50" rx="12" ry="16" fill="#d0a898"/><rect x="40" y="44" width="24" height="7" rx="3" fill="#1a1a1a"/><rect x="0" y="75" width="100" height="25" fill="#8a8aa8"/><path d="M5 80l12 6-6 12z" fill="#e04050"/><text x="22" y="92" font-size="11" fill="#fff" font-family="Liberation Sans">Анастасія Ш</text></g></svg>
<svg class="sv" style="left:1619.7px;top:619.9px;filter:blur(1px)" width="55.0" height="55.0" viewBox="0 0 100 100"><defs><clipPath id="ac10"><circle cx="50" cy="50" r="50"/></clipPath></defs><g clip-path="url(#ac10)"><rect width="100" height="100" fill="#6a6a6a"/><path d="M0 0h100v45H0z" fill="#9a9a9a"/><path d="M10 10l10 30M30 5l5 35M60 8l-5 30M85 10l-10 30" stroke="#ddd" stroke-width="4"/><path d="M20 100c0-35 10-55 25-55s20 20 20 55z" fill="#1a1a1a"/><ellipse cx="43" cy="45" rx="8" ry="10" fill="#888"/><path d="M60 100V60h30v40z" fill="#2a2a2a"/></g></svg>
<svg class="sv" style="left:1801.7px;top:619.9px;filter:blur(1px)" width="55.0" height="55.0" viewBox="0 0 100 100"><defs><clipPath id="ac11"><circle cx="50" cy="50" r="50"/></clipPath></defs><g clip-path="url(#ac11)"><rect width="100" height="100" fill="#5a4a3c"/><path d="M0 0h100v40H0z" fill="#a8a098"/><path d="M10 0l15 60M40 0l-5 50M70 0l10 60M90 10l-5 50" stroke="#4a3a30" stroke-width="4"/><path d="M10 100l30-50c10-10 30-5 40 10l20 40z" fill="#8a8580"/><ellipse cx="52" cy="45" rx="12" ry="10" fill="#c0a090"/><path d="M45 60l25 15-5 25z" fill="#e8e4e0"/></g></svg>
<svg class="sv" style="left:1470.4px;top:758.4px;filter:blur(1px)" width="81.2" height="81.2" viewBox="0 0 100 100"><defs><clipPath id="ac12"><circle cx="50" cy="50" r="50"/></clipPath></defs><g clip-path="url(#ac12)"><rect width="100" height="100" fill="#9a9a9a"/><path d="M60 0h40v100H60z" fill="#c0c0c0"/><path d="M0 0h30v100H0z" fill="#2a2a2a"/><ellipse cx="45" cy="28" rx="33" ry="18" fill="#111"/><path d="M28 100C25 60 30 30 48 30s25 30 20 70z" fill="#1a1a1a"/><ellipse cx="50" cy="45" rx="11" ry="15" fill="#d0d0d0"/><path d="M30 100c0-20 8-30 20-30s18 10 18 30z" fill="#f0f0f0"/><path d="M65 50c15-5 30 10 30 30v20H68z" fill="#4a4a4a"/></g></svg>
<svg class="sv" style="left:1743.4px;top:758.0px;filter:blur(1px)" width="82.0" height="82.0" viewBox="0 0 100 100"><defs><clipPath id="ac13"><circle cx="50" cy="50" r="50"/></clipPath></defs><g clip-path="url(#ac13)"><rect width="100" height="100" fill="#e0a080"/><path d="M0 0h100v28H0z" fill="#b89888"/><path d="M20 0v22M75 0l5 25" stroke="#5a7aa8" stroke-width="10"/><path d="M0 28h100v4H0z" fill="#f0c8a8"/><ellipse cx="52" cy="40" rx="16" ry="22" fill="#f4d0c0"/><path d="M36 25c5-20 30-20 34 0-5-8-28-8-34 0z" fill="#7a5030"/><path d="M66 40c8 15 10 40 0 60h-8c8-20 8-40 0-60z" fill="#8a5a38"/><path d="M10 100c0-20 15-35 40-35s35 15 40 35z" fill="#e8d040"/><path d="M42 65l10 18 10-18z" fill="#f0c8a8"/></g></svg>

<!-- BOTTOM -->
<div id="mbot" class="a"></div>
<div class="a" style="left:30px;top:922px;font-size:22.8px;color:#3c4043;white-space:nowrap">Час куратора</div>
<svg class="sv" style="left:185px;top:926px" width="20" height="20"><path d="M3 13l7-7 7 7" fill="none" stroke="#5f6368" stroke-width="2.2"/></svg>
<div class="av" style="left:835px;top:901px;width:70px;height:70px;background:#e33c2f"></div>
<div class="av" style="left:925px;top:901px;width:70px;height:70px;background:#fff;border:1px solid #dadce0"></div>
<div class="av" style="left:1015px;top:901px;width:70px;height:70px;background:#e33c2f"></div>
<svg class="sv" style="left:0;top:0" width="1920" height="1035">
 <path transform="translate(852.3 921.3) scale(1.3)" fill="#fff" d="M10.8 4.9c0-.66.54-1.2 1.2-1.2s1.2.54 1.2 1.2l-.01 3.91L15 10.6V5c0-1.66-1.34-3-3-3-1.54 0-2.79 1.16-2.96 2.65l1.76 1.76V4.9zM19 11h-1.7c0 .58-.1 1.13-.27 1.64l1.27 1.27c.44-.88.7-1.870.7-2.91zM4.41 2.860L3 4.27l6 6V11c0 1.66 1.34 3 3 3 .23 0 .44-.03.65-.08l1.66 1.66c-.71.33-1.5.52-2.31.52-2.76 0-5.3-2.1-5.3-5.1H5c0 3.41 2.72 6.23 6 6.72V21h2v-3.28c.91-.13 1.77-.45 2.55-.9l4.2 4.2 1.41-1.41L4.41 2.86z"/>
 <path transform="translate(945 920.85) scale(1.25)" fill="#e33c2f" d="M12 9c-1.6 0-3.15.25-4.6.72v3.1c0 .39-.23.74-.56.9-.98.49-1.870 1.12-2.66 1.85-.18.18-.43.28-.7.28-.28 0-.53-.11-.71-.29L.29 13.08c-.18-.17-.29-.42-.29-.7 0-.28.11-.53.29-.71C3.34 8.78 7.46 7 12 7s8.66 1.78 11.71 4.67c.18.18.29.43.29.71 0 .28-.11.53-.29.71l-2.48 2.48c-.18.18-.43.29-.71.29-.27 0-.52-.11-.7-.28-.79-.74-1.69-1.36-2.67-1.85-.33-.16-.56-.5-.56-.9v-3.1C15.15 9.25 13.6 9 12 9z"/>
 <path transform="translate(1033.9 920) scale(1.35)" fill="#fff" d="M18 10.48V6c0-1.1-.9-2-2-2H6.83l2 2H16v7.17l2 2v-1.65l4 3.98v-11l-4 3.98zM16 16L6 6 2.81 2.81 1.39 4.22l.85.85C2.09 5.35 2 5.66 2 6v12c0 1.1.9 2 2 2h12c.34 0 .65-.09.93-.24l2.85 2.85 1.41-1.41L18 18l-2-2zM4 18V6.830L15.17 18H4z"/>
</svg>
<svg class="sv" style="left:1493.5px;top:901px" width="40" height="40">
 <path d="M12 22V12a2 2 0 0 1 4 0v9M16 21V9a2 2 0 0 1 4 0v12M20 21V9a2 2 0 0 1 4 0v12M24 21v-9a2 2 0 0 1 4 0v14c0 5-4 9-9 9h-2c-3 0-5-2-7-4l-5-6c-1-1-1-2 0-3s2-1 3 0l4 3" fill="none" stroke="#5f6368" stroke-width="2.4" stroke-linejoin="round"/>
</svg>
<div class="a" style="left:1458px;top:942.5px;font-size:16px;color:#3c4043;white-space:nowrap;letter-spacing:.85px">Підняти руку</div>
<svg class="sv" style="left:1700px;top:895px" width="40" height="30">
 <rect x="7" y="5" width="26" height="20" rx="1" fill="none" stroke="#5f6368" stroke-width="2.6"/>
 <path d="M20 20v-9M16 14.5l4-4 4 4" fill="none" stroke="#5f6368" stroke-width="2.6"/>
</svg>
<div class="a" style="left:1601px;top:931px;font-size:15.5px;color:#3c4043;white-space:nowrap;letter-spacing:.73px">Вадим Володимирович Сулі...</div>
<div class="a" style="left:1626px;top:953px;font-size:15.5px;color:#3c4043;white-space:nowrap;letter-spacing:1.05px">проводить презентацію</div>
<svg class="sv" style="left:1876px;top:922px" width="14" height="28"><circle cx="7" cy="5" r="2.6" fill="#3c4043"/><circle cx="7" cy="14" r="2.6" fill="#3c4043"/><circle cx="7" cy="23" r="2.6" fill="#3c4043"/></svg>

<!-- WINDOWS TASKBAR -->
<div id="wtask" class="a" style="background:linear-gradient(90deg,#ebe5e0 0,#ece3db 30%,#eee2d7 55%,#ebe4dd 68%,#e8e7e5 80%,#e8e8e8 100%)"></div>
<div class="a" style="left:805px;top:989px;width:60px;height:46px;background:#f6f1ee"></div>
<div class="a" style="left:1913px;top:989px;width:1px;height:46px;background:#c8c8c8"></div>
<svg class="sv" style="left:0;top:989px" width="1920" height="46">
 <g fill="#111"><rect x="19" y="15" width="9.5" height="9"/><rect x="30" y="13.5" width="11" height="10.5"/><rect x="19" y="25.5" width="9.5" height="9"/><rect x="30" y="25.5" width="11" height="10.5"/></g>
 <circle cx="93" cy="21.5" r="7" fill="none" stroke="#111" stroke-width="1.8"/><path d="M88 26.5l-7.5 8" stroke="#111" stroke-width="2"/>
 <g fill="none" stroke="#111" stroke-width="1.6"><rect x="141" y="17" width="11" height="14"/><path d="M140 14h14M140 34h14M159 12v5M159 22v4M159 31v5"/></g>
 <path d="M200 17h8l2 2h18v17h-28z" fill="#e8b43a"/><path d="M200 21h28v15h-28z" fill="#f8d66a"/><path d="M206 36v-8h16v8h-4v-4h-8v4z" fill="#2a7ad0"/>
 <circle cx="276" cy="25" r="14.5" fill="#2a9ae0"/><path d="M266 25l18-7-3 15-5-4-3 3v-5l7-6-9 5z" fill="#fff"/>
 <circle cx="284" cy="32" r="8.5" fill="#777"/><text x="280.5" y="36" font-family="Liberation Sans" font-size="11" fill="#fff">4</text>
 <path d="M329 12h18a6 6 0 0 1 6 6v11a6 6 0 0 1-6 6h-8l-6 5v-5h-4a6 6 0 0 1-6-6V18a6 6 0 0 1 6-6z" fill="#fff" stroke="#7b5bd0" stroke-width="3"/>
 <path d="M332 18c1 7 6 12 12 13l2-3-3-2-2 2c-3-1-5-4-6-7l2-2-2-3z" fill="#7b5bd0"/>
 <circle cx="399.5" cy="25" r="14" fill="#db4437"/><path d="M399.5 25L385.5 25A14 14 0 0 0 406.5 37.1z" fill="#0f9d58"/><path d="M399.5 25h14A14 14 0 0 1 406.5 37.1z" fill="#f4b400"/><circle cx="399.5" cy="25" r="6.2" fill="#fff"/><circle cx="399.5" cy="25" r="4.8" fill="#4285f4"/>
 <ellipse cx="460" cy="21" rx="13" ry="7" fill="none" stroke="#e04040" stroke-width="1.5"/><path d="M455 16l7 20M466 16l-7 20" stroke="#333" stroke-width="1.3"/><circle cx="456" cy="34" r="3.5" fill="none" stroke="#3a8ad0" stroke-width="2"/><circle cx="466" cy="34" r="3.5" fill="none" stroke="#3a8ad0" stroke-width="2"/>
 <ellipse cx="523" cy="25" rx="13" ry="14.5" fill="#e0242a"/><ellipse cx="523" cy="25" rx="5.5" ry="10" fill="#ebe3dd"/>
 <circle cx="585" cy="25" r="13.5" fill="#1aa0e8"/><text x="578" y="33" font-family="Liberation Sans" font-weight="bold" font-size="21" fill="#fff">S</text>
 <rect x="633" y="11" width="28" height="28" rx="3" fill="#0a1a2e"/><text x="636" y="31.5" font-family="Liberation Sans" font-weight="bold" font-size="15" fill="#3aa8f8">Ps</text>
 <path d="M697 25l7 6 15-14" fill="none" stroke="#3a7ad8" stroke-width="4"/><path d="M697 25l7 6" stroke="#2a5aa8" stroke-width="4"/>
 <rect x="757" y="12" width="28" height="27" rx="6" fill="#3d8ef0"/><rect x="762" y="19" width="13" height="11" rx="2" fill="#fff"/><path d="M776 22l5-3v11l-5-3z" fill="#fff"/>
 <circle cx="833" cy="25" r="14" fill="#db4437"/><path d="M833 25L819 25A14 14 0 0 0 840 37.1z" fill="#0f9d58"/><path d="M833 25h14A14 14 0 0 1 840 37.1z" fill="#f4b400"/><circle cx="833" cy="25" r="6.2" fill="#fff"/><circle cx="833" cy="25" r="4.8" fill="#4285f4"/>
 <circle cx="841" cy="31" r="8" fill="#6a4a3a"/>
 <rect x="881" y="11" width="29" height="29" fill="#1f3566"/><path d="M895.5 15l8 4.5v9l-8 4.5-8-4.5v-9z" fill="#3f7ee6"/><path d="M890.5 20.5l2.5 8 2.5-6 2.5 6 2.5-8" fill="none" stroke="#fff" stroke-width="1.4"/>
 <path d="M1581 28l8-8 8 8" fill="none" stroke="#111" stroke-width="1.5"/>
 <g fill="none" stroke="#111" stroke-width="1.4"><rect x="1614" y="20" width="10" height="11" rx="3"/><path d="M1612 24v4M1626 24v4M1616 18h6M1616 33h6"/></g>
 <rect x="1645" y="15" width="8" height="13" rx="4" fill="#111"/><path d="M1642.5 24a6.5 6.5 0 0 0 13 0M1649 30.5v4M1645 34.5h8" fill="none" stroke="#111" stroke-width="1.4"/>
 <g fill="none" stroke="#111" stroke-width="1.5"><path d="M1671 33a13 13 0 0 1 13-13M1675 33a9 9 0 0 1 9-9M1679 33a5 5 0 0 1 5-5"/></g><circle cx="1684" cy="33" r="1.5" fill="#111"/>
 <rect x="1702" y="20" width="15" height="10" fill="#111"/><rect x="1717" y="23" width="2" height="4" fill="#111"/><path d="M1698 22h4M1700 20v4" stroke="#111" stroke-width="1.2"/>
 <path d="M1868.5 15.5h20v14h-11l-4 4v-4h-5z" fill="none" stroke="#111" stroke-width="1.4"/>
</svg>
<div class="a" style="left:1731px;top:1006px;font-size:13px;color:#111;white-space:nowrap">УКР</div>
<div class="a" style="left:1793px;top:994px;font-size:13px;color:#111;white-space:nowrap">13:34</div>
<div class="a" style="left:1776px;top:1017px;font-size:13px;color:#111;white-space:nowrap">05.04.2021</div>

</body></html>
